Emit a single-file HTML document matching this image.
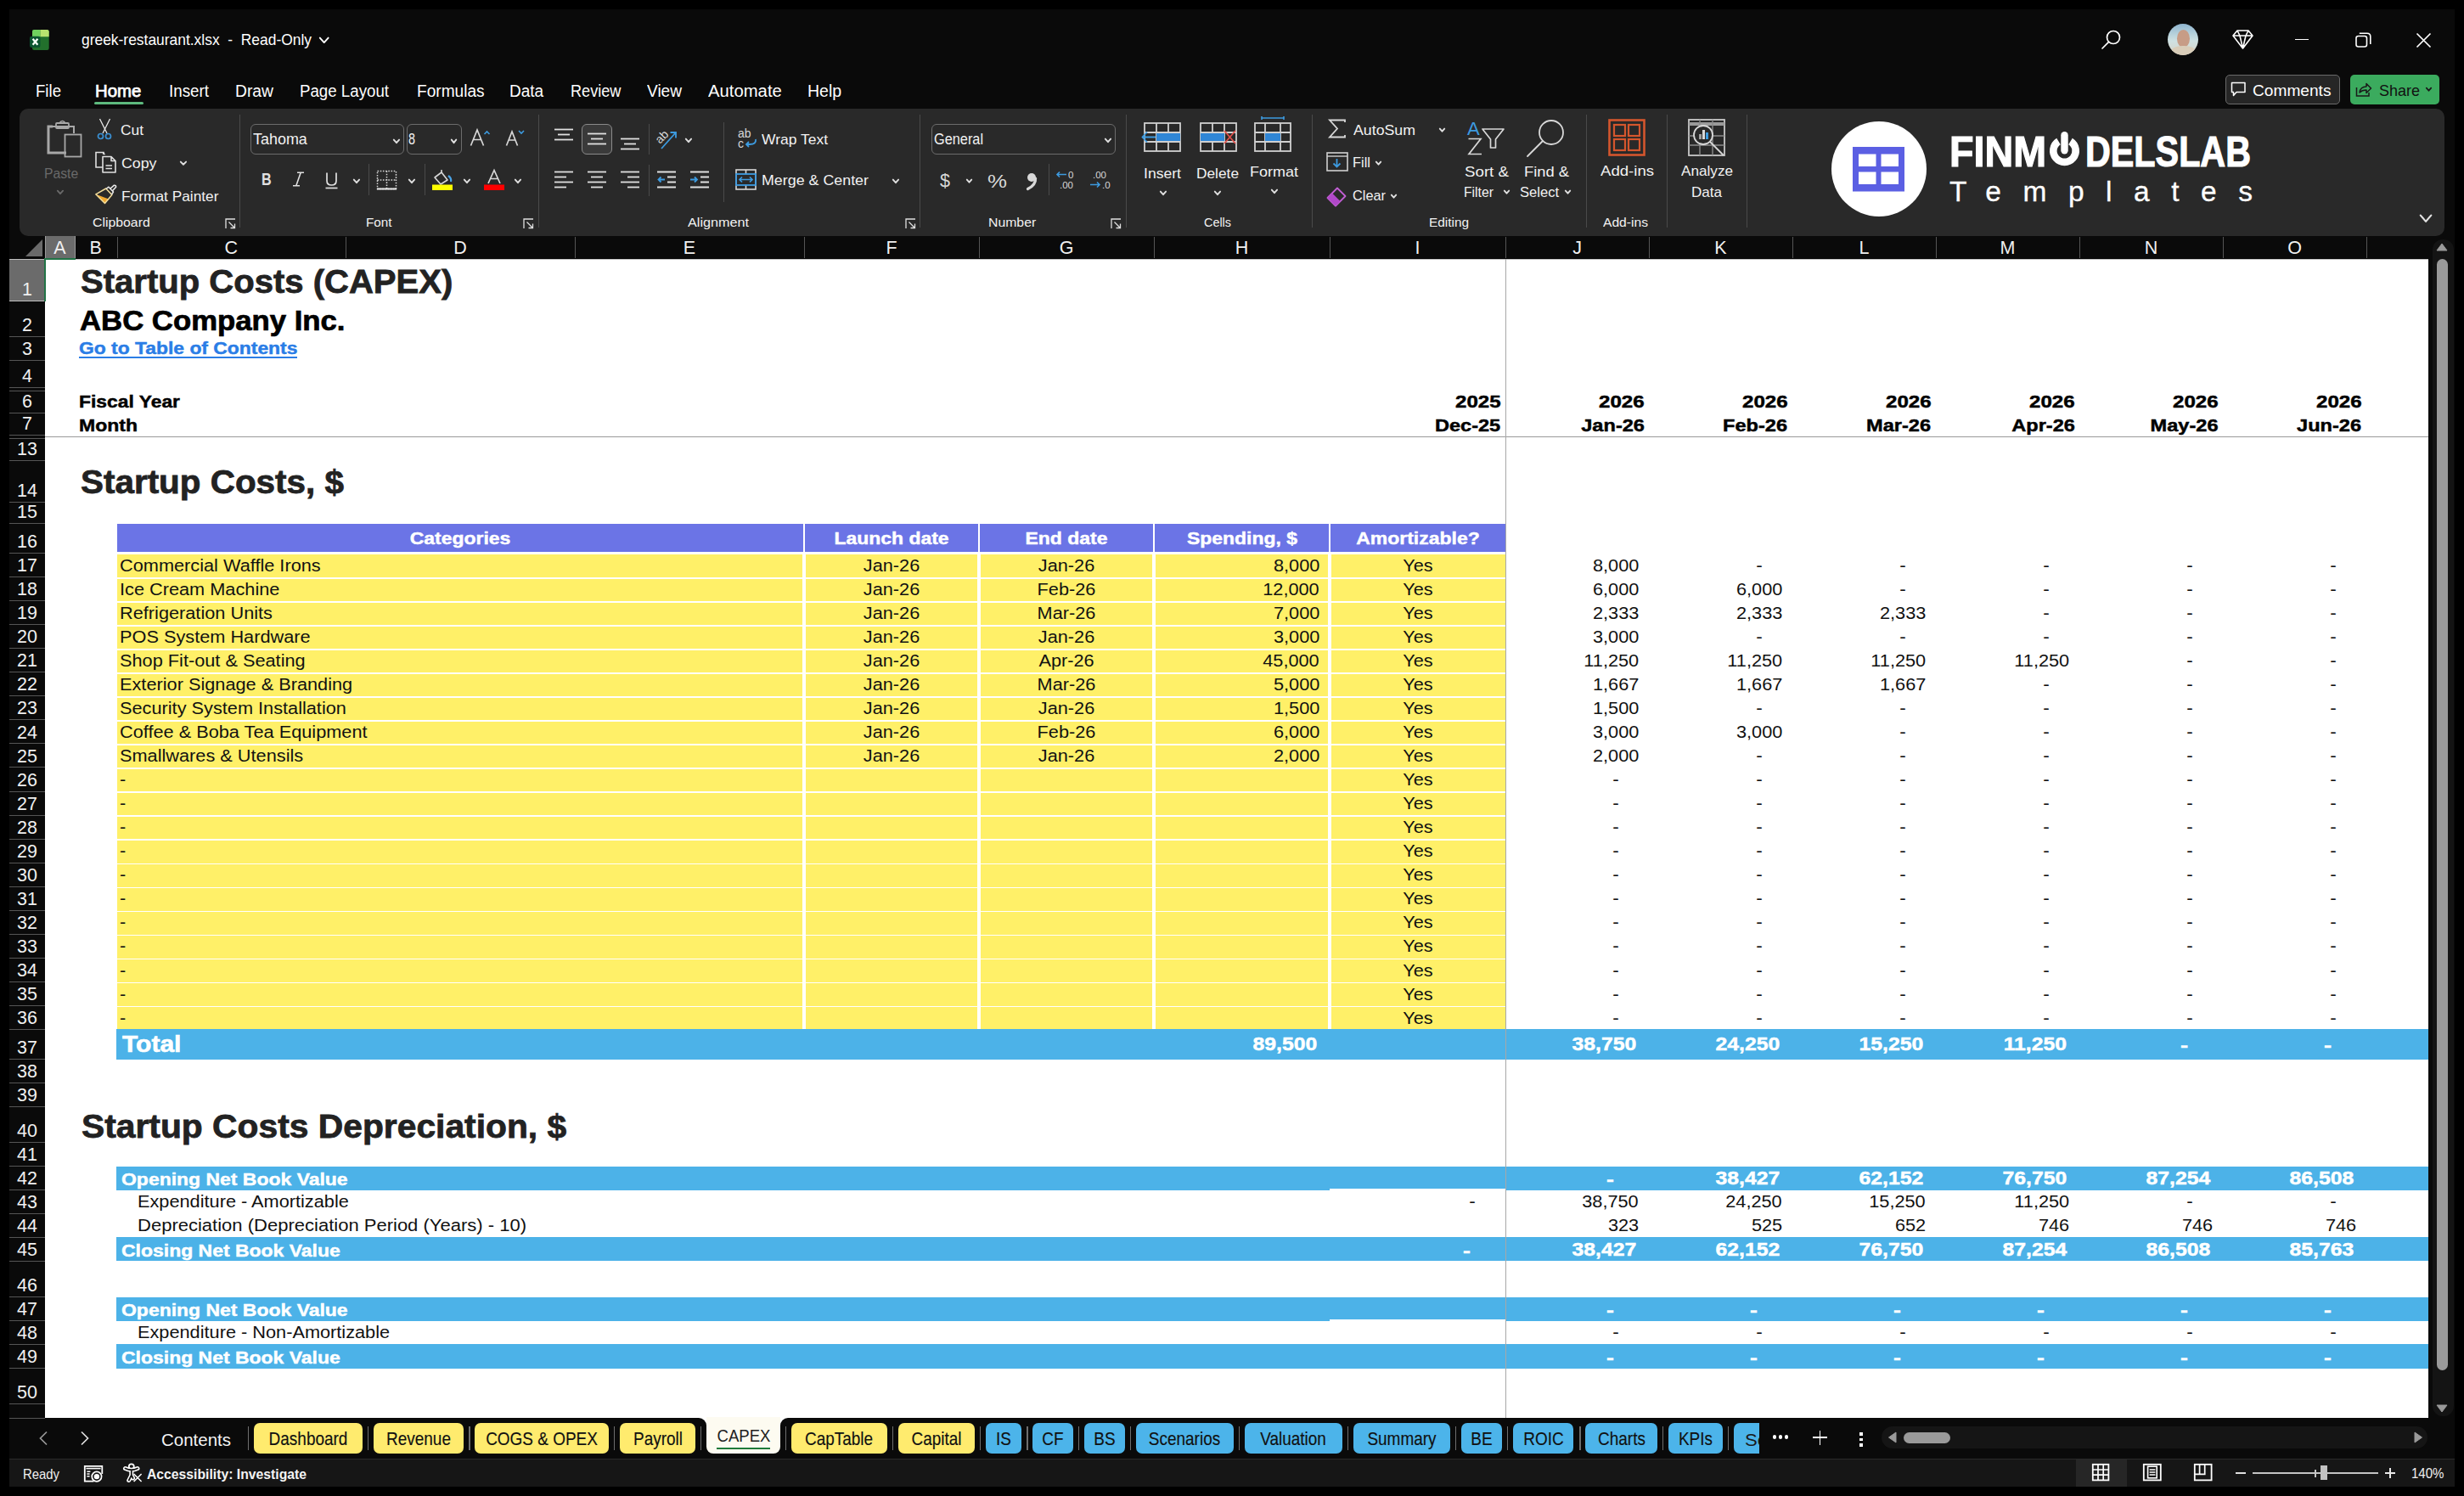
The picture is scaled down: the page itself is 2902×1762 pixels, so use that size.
<!DOCTYPE html>
<html><head><meta charset="utf-8"><title>greek-restaurant.xlsx</title>
<style>
html,body{margin:0;padding:0;}
body{width:2902px;height:1762px;position:relative;overflow:hidden;background:#000;font-family:"Liberation Sans",sans-serif;}
.t{position:absolute;white-space:pre;}
.r{position:absolute;}
svg.r{overflow:visible;}
</style></head><body>
<div class="r" style="left:11.00px;top:11.00px;width:2880.00px;height:1739.00px;background:#0a0a0a;"></div>
<svg class="r" style="left:34.00px;top:34.00px;" width="25.00" height="26.00" viewBox="0 0 25.00 26.00">
<rect x="4" y="1" width="19.7" height="24" rx="2.2" fill="#22702c"/>
<path d="M4 9.3 V3.2 Q4 1 6.2 1 H13.5 V9.3 Z" fill="#6fd15e"/>
<path d="M13.5 1 H21.5 Q23.7 1 23.7 3.2 V9.3 H13.5 Z" fill="#b9e46f"/>
<rect x="1" y="8.7" width="12.5" height="13.3" rx="2.2" fill="#0b5530"/>
<path d="M4.6 11.8 L10.4 18.8 M10.4 11.8 L4.6 18.8" stroke="#f4fff6" stroke-width="2.3"/>
</svg>
<div class="t" style="top:38.34px;font-size:18.50px;line-height:18.50px;color:#ffffff;left:95.50px;transform:scaleX(0.9414);transform-origin:0 0;">greek-restaurant.xlsx  -  Read-Only</div>
<svg class="r" style="left:375.28px;top:42.50px;" width="13.44" height="8.44" viewBox="0 0 13.44 8.44"><path d="M1.80 1.6 L6.72 7.04 L11.64 1.6" fill="none" stroke="#ffffff" stroke-width="1.9" stroke-linecap="round" stroke-linejoin="round"/></svg>
<svg class="r" style="left:2474.00px;top:34.00px;" width="25.00" height="26.00" viewBox="0 0 25.00 26.00"><circle cx="15" cy="10" r="7.5" fill="none" stroke="#fff" stroke-width="1.7"/><path d="M9.6 15.4 L2 23" stroke="#fff" stroke-width="1.7" stroke-linecap="round"/></svg>
<div class="r" style="left:2553px;top:28px;width:36px;height:37px;border-radius:50%;overflow:hidden;background:linear-gradient(180deg,#8fb5cf 0%,#b9d3dc 35%,#cfe1e2 55%,#d7d2c4 100%);"><div class="r" style="left:11px;top:7px;width:15px;height:21px;border-radius:50%;background:#c79c86;"></div><div class="r" style="left:4px;top:26px;width:29px;height:16px;border-radius:45% 45% 0 0;background:#d9cdb9;"></div></div>
<svg class="r" style="left:2628.00px;top:34.00px;" width="27.00" height="25.00" viewBox="0 0 27.00 25.00"><path d="M7 2 L20 2 L25 8 L13.5 23 L2 8 Z M2 8 L25 8 M7 2 L10 8 L13.5 23 L17 8 L20 2" fill="none" stroke="#fff" stroke-width="1.6" stroke-linejoin="round"/></svg>
<div class="r" style="left:2703.00px;top:45.50px;width:16.00px;height:1.70px;background:#ffffff;"></div>
<svg class="r" style="left:2774.00px;top:38.00px;" width="19.00" height="19.00" viewBox="0 0 19.00 19.00"><rect x="1" y="4.5" width="12.5" height="12.5" rx="2.5" fill="none" stroke="#fff" stroke-width="1.6"/><path d="M4.8 1.2 H14 Q17.8 1.2 17.8 5 V14" fill="none" stroke="#fff" stroke-width="1.6"/></svg>
<svg class="r" style="left:2845.00px;top:38.00px;" width="19.00" height="19.00" viewBox="0 0 19.00 19.00"><path d="M1.5 1.5 L17.5 17.5 M17.5 1.5 L1.5 17.5" stroke="#fff" stroke-width="1.7"/></svg>
<div class="t" style="top:97.07px;font-size:20.00px;line-height:20.00px;color:#ffffff;left:42.00px;transform:scaleX(0.9309);transform-origin:0 0;">File</div>
<div class="t" style="top:97.07px;font-size:20.00px;line-height:20.00px;color:#ffffff;left:111.70px;transform:scaleX(1.0178);transform-origin:0 0;-webkit-text-stroke:0.75px #ffffff;">Home</div>
<div class="t" style="top:97.07px;font-size:20.00px;line-height:20.00px;color:#ffffff;left:198.60px;transform:scaleX(0.9396);transform-origin:0 0;">Insert</div>
<div class="t" style="top:97.07px;font-size:20.00px;line-height:20.00px;color:#ffffff;left:277.00px;transform:scaleX(0.9642);transform-origin:0 0;">Draw</div>
<div class="t" style="top:97.07px;font-size:20.00px;line-height:20.00px;color:#ffffff;left:353.40px;transform:scaleX(0.9348);transform-origin:0 0;">Page Layout</div>
<div class="t" style="top:97.07px;font-size:20.00px;line-height:20.00px;color:#ffffff;left:491.40px;transform:scaleX(0.9550);transform-origin:0 0;">Formulas</div>
<div class="t" style="top:97.07px;font-size:20.00px;line-height:20.00px;color:#ffffff;left:600.40px;transform:scaleX(0.9515);transform-origin:0 0;">Data</div>
<div class="t" style="top:97.07px;font-size:20.00px;line-height:20.00px;color:#ffffff;left:671.60px;transform:scaleX(0.9058);transform-origin:0 0;">Review</div>
<div class="t" style="top:97.07px;font-size:20.00px;line-height:20.00px;color:#ffffff;left:762.00px;transform:scaleX(0.9537);transform-origin:0 0;">View</div>
<div class="t" style="top:97.07px;font-size:20.00px;line-height:20.00px;color:#ffffff;left:834.00px;transform:scaleX(1.0139);transform-origin:0 0;">Automate</div>
<div class="t" style="top:97.07px;font-size:20.00px;line-height:20.00px;color:#ffffff;left:951.30px;transform:scaleX(0.9773);transform-origin:0 0;">Help</div>
<div class="r" style="left:111.00px;top:120.00px;width:58.00px;height:3.20px;background:#5db97e;border-radius:2px;"></div>
<div class="r" style="left:2621px;top:87.5px;width:132.5px;height:33px;border:1px solid #6a6a6a;border-radius:5px;background:#262626;"></div>
<svg class="r" style="left:2627.00px;top:96.00px;" width="19.00" height="19.00" viewBox="0 0 19.00 19.00"><path d="M1.5 1.5 H17 V12.5 H7 L3.5 16.5 V12.5 H1.5 Z" fill="none" stroke="#fff" stroke-width="1.5" stroke-linejoin="round"/></svg>
<div class="t" style="top:97.42px;font-size:19.00px;line-height:19.00px;color:#ffffff;left:2653.00px;transform:scaleX(1.0070);transform-origin:0 0;">Comments</div>
<div class="r" style="left:2768px;top:87.5px;width:105px;height:35px;border-radius:5px;background:#3bab5e;"></div>
<svg class="r" style="left:2774.00px;top:96.00px;" width="20.00" height="19.00" viewBox="0 0 20.00 19.00"><path d="M1.5 7 V17 H16 V13" fill="none" stroke="#1a1a1a" stroke-width="1.5"/><path d="M5 13 Q6 6 13 6 V2.5 L18.5 8 L13 13.5 V10 Q8 10 5 13 Z" fill="none" stroke="#1a1a1a" stroke-width="1.5" stroke-linejoin="round"/></svg>
<div class="t" style="top:97.42px;font-size:19.00px;line-height:19.00px;color:#111111;left:2802.00px;transform:scaleX(0.9467);transform-origin:0 0;">Share</div>
<svg class="r" style="left:2856.48px;top:101.50px;" width="9.04" height="6.14" viewBox="0 0 9.04 6.14"><path d="M1.80 1.6 L4.52 4.74 L7.24 1.6" fill="none" stroke="#1a1a1a" stroke-width="1.8" stroke-linecap="round" stroke-linejoin="round"/></svg>
<div class="r" style="left:23.00px;top:128.00px;width:2856.00px;height:150.00px;background:#292929;border-radius:10px;"></div>
<svg class="r" style="left:54.00px;top:140.00px;" width="44.00" height="48.00" viewBox="0 0 44.00 48.00">
<path d="M8 9 H3 V40 H24" fill="none" stroke="#a8a8a8" stroke-width="3"/>
<path d="M6.5 9 H33 V17" fill="none" stroke="#a8a8a8" stroke-width="2"/>
<rect x="12" y="5" width="15" height="6" rx="1" fill="none" stroke="#a8a8a8" stroke-width="1.8"/>
<path d="M16 5 Q19.5 0 23 5" fill="none" stroke="#a8a8a8" stroke-width="1.6"/>
<rect x="22.5" y="18.5" width="19" height="26" fill="none" stroke="#a8a8a8" stroke-width="1.8"/>
</svg>
<div class="t" style="top:196.03px;font-size:16.50px;line-height:16.50px;color:#6a6a6a;left:51.80px;transform:scaleX(0.9528);transform-origin:0 0;">Paste</div>
<svg class="r" style="left:66.04px;top:223.00px;" width="9.92" height="6.60" viewBox="0 0 9.92 6.60"><path d="M1.80 1.6 L4.96 5.20 L8.12 1.6" fill="none" stroke="#6a6a6a" stroke-width="1.8" stroke-linecap="round" stroke-linejoin="round"/></svg>
<svg class="r" style="left:113.00px;top:139.00px;" width="21.00" height="27.00" viewBox="0 0 21.00 27.00">
<path d="M4.5 1 L13 18 M16.5 1 L8 18" stroke="#e8e8e8" stroke-width="1.3"/>
<circle cx="5.5" cy="21.5" r="3" fill="none" stroke="#3a8fd2" stroke-width="1.7"/>
<circle cx="14.5" cy="21.5" r="3" fill="none" stroke="#3a8fd2" stroke-width="1.7"/>
</svg>
<div class="t" style="top:145.03px;font-size:16.50px;line-height:16.50px;color:#f2f2f2;left:142.00px;transform:scaleX(1.0515);transform-origin:0 0;">Cut</div>
<svg class="r" style="left:111.00px;top:178.00px;" width="27.00" height="27.00" viewBox="0 0 27.00 27.00">
<path d="M11 4 V1.5 H2 V19 H10" fill="none" stroke="#e0e0e0" stroke-width="1.6"/>
<path d="M10 1.5 L12.5 4" fill="none" stroke="#e0e0e0" stroke-width="1.4"/>
<path d="M10 6.5 H20 L25 11.5 V25 H10 Z M20 6.5 V11.5 H25" fill="none" stroke="#e0e0e0" stroke-width="1.6" stroke-linejoin="round"/>
<path d="M13.5 17 H21 M13.5 20.5 H21" stroke="#e0e0e0" stroke-width="1.6"/>
</svg>
<div class="t" style="top:184.03px;font-size:16.50px;line-height:16.50px;color:#f2f2f2;left:142.50px;transform:scaleX(1.0774);transform-origin:0 0;">Copy</div>
<svg class="r" style="left:210.54px;top:188.50px;" width="9.92" height="6.14" viewBox="0 0 9.92 6.14"><path d="M1.80 1.6 L4.96 4.74 L8.12 1.6" fill="none" stroke="#e0e0e0" stroke-width="1.9" stroke-linecap="round" stroke-linejoin="round"/></svg>
<svg class="r" style="left:111.00px;top:217.00px;" width="27.00" height="25.00" viewBox="0 0 27.00 25.00">
<path d="M1.8 11.8 L7 17 L12.5 22.5 L17 17.5 Z" fill="#f0a830"/>
<path d="M1.8 11.8 L13.8 5 L20.8 12.5 L12.5 22.5 Z" fill="none" stroke="#f2dc9a" stroke-width="1.5" stroke-linejoin="round"/>
<path d="M14 5.5 L17 3.2 L22.5 9 L20.5 12" fill="none" stroke="#e8e8e8" stroke-width="1.5" stroke-linejoin="round"/>
<path d="M18.5 5.5 L23.2 1.3 Q25.8 0.8 25.6 3.3 L21.2 8" fill="none" stroke="#e8e8e8" stroke-width="1.6" stroke-linejoin="round"/>
</svg>
<div class="t" style="top:223.03px;font-size:16.50px;line-height:16.50px;color:#f2f2f2;left:142.50px;transform:scaleX(1.0493);transform-origin:0 0;">Format Painter</div>
<div class="t" style="top:254.38px;font-size:15.50px;line-height:15.50px;color:#f2f2f2;left:109.00px;transform:scaleX(1.0204);transform-origin:0 0;">Clipboard</div>
<svg class="r" style="left:265.00px;top:256.50px;" width="13.00" height="13.00" viewBox="0 0 13.00 13.00"><path d="M1 12 V1 H12" fill="none" stroke="#e0e0e0" stroke-width="1.3"/><path d="M4.5 4.5 L11.5 11.5 M11.5 6.5 V11.5 H6.5" fill="none" stroke="#e0e0e0" stroke-width="1.3"/></svg>
<div class="r" style="left:282.00px;top:135.00px;width:1.00px;height:133.00px;background:#4a4a4a;"></div>
<div class="r" style="left:295.3px;top:146.2px;width:178.5px;height:33.5px;border:1px solid #6c6c6c;border-radius:6px;"></div>
<div class="t" style="top:156.19px;font-size:17.50px;line-height:17.50px;color:#f2f2f2;left:298.00px;transform:scaleX(1.0248);transform-origin:0 0;">Tahoma</div>
<svg class="r" style="left:462.14px;top:162.50px;" width="9.92" height="6.60" viewBox="0 0 9.92 6.60"><path d="M1.80 1.6 L4.96 5.20 L8.12 1.6" fill="none" stroke="#e0e0e0" stroke-width="1.9" stroke-linecap="round" stroke-linejoin="round"/></svg>
<div class="r" style="left:479px;top:146.2px;width:62.7px;height:33.5px;border:1px solid #6c6c6c;border-radius:6px;"></div>
<div class="t" style="top:156.19px;font-size:17.50px;line-height:17.50px;color:#f2f2f2;left:480.60px;transform:scaleX(0.8220);transform-origin:0 0;">8</div>
<svg class="r" style="left:530.48px;top:162.50px;" width="9.04" height="6.60" viewBox="0 0 9.04 6.60"><path d="M1.80 1.6 L4.52 5.20 L7.24 1.6" fill="none" stroke="#e0e0e0" stroke-width="1.9" stroke-linecap="round" stroke-linejoin="round"/></svg>
<svg class="r" style="left:553.00px;top:151.00px;" width="26.00" height="22.00" viewBox="0 0 26.00 22.00"><path d="M1.5 20.5 L9 2 L16.5 20.5 M4.5 13.5 H13.5" fill="none" stroke="#d8d8d8" stroke-width="1.7"/><path d="M17.5 7 L20.5 4 L23.5 7" fill="none" stroke="#3d9be0" stroke-width="1.6"/></svg>
<svg class="r" style="left:595.00px;top:151.00px;" width="24.00" height="22.00" viewBox="0 0 24.00 22.00"><path d="M1.5 20.5 L8 4 L14.5 20.5 M4 14 H12" fill="none" stroke="#d8d8d8" stroke-width="1.7"/><path d="M16 3 L19 6 L22 3" fill="none" stroke="#3d9be0" stroke-width="1.6"/></svg>
<div class="t" style="top:200.87px;font-size:20.00px;line-height:20.00px;color:#e0e0e0;font-weight:bold;left:307.80px;transform:scaleX(0.8100);transform-origin:0 0;">B</div>
<svg class="r" style="left:344.00px;top:202.00px;" width="15.00" height="18.00" viewBox="0 0 15.00 18.00"><path d="M6 1.2 H14 M1 16.8 H9 M10.2 1.2 L4.8 16.8" fill="none" stroke="#e0e0e0" stroke-width="1.6"/></svg>
<svg class="r" style="left:382.00px;top:202.00px;" width="17.00" height="21.00" viewBox="0 0 17.00 21.00"><path d="M3 1.5 V11 Q3 16 8.5 16 Q14 16 14 11 V1.5" fill="none" stroke="#e0e0e0" stroke-width="1.7"/><path d="M1.5 19.5 H15.5" stroke="#e0e0e0" stroke-width="1.7"/></svg>
<svg class="r" style="left:414.54px;top:209.50px;" width="9.92" height="6.60" viewBox="0 0 9.92 6.60"><path d="M1.80 1.6 L4.96 5.20 L8.12 1.6" fill="none" stroke="#e0e0e0" stroke-width="1.9" stroke-linecap="round" stroke-linejoin="round"/></svg>
<div class="r" style="left:434.00px;top:193.00px;width:1.00px;height:37.00px;background:#4a4a4a;"></div>
<svg class="r" style="left:443.00px;top:200.00px;" width="25.00" height="24.00" viewBox="0 0 25.00 24.00"><path d="M1.5 1.5 H23.5 V22.5 H1.5 Z M12.5 1.5 V22.5 M1.5 12 H23.5" fill="none" stroke="#d8d8d8" stroke-width="1.5" stroke-dasharray="1.6 1.6"/><path d="M1 22.5 H24" stroke="#e8e8e8" stroke-width="2"/></svg>
<svg class="r" style="left:479.54px;top:209.50px;" width="9.92" height="6.60" viewBox="0 0 9.92 6.60"><path d="M1.80 1.6 L4.96 5.20 L8.12 1.6" fill="none" stroke="#e0e0e0" stroke-width="1.9" stroke-linecap="round" stroke-linejoin="round"/></svg>
<div class="r" style="left:499.50px;top:193.00px;width:1.00px;height:37.00px;background:#4a4a4a;"></div>
<svg class="r" style="left:508.00px;top:199.00px;" width="26.00" height="26.00" viewBox="0 0 26.00 26.00"><path d="M4 10 L12 4 L19 13 L11 18 Z" fill="none" stroke="#d8d8d8" stroke-width="1.6" stroke-linejoin="round"/><path d="M12 4 V1" stroke="#d8d8d8" stroke-width="1.6"/><path d="M20 8 Q24 11 23 15" fill="none" stroke="#4aa3e6" stroke-width="2.2"/><rect x="1" y="18.5" width="24" height="6.5" fill="#ffff00"/></svg>
<svg class="r" style="left:544.54px;top:209.50px;" width="9.92" height="6.60" viewBox="0 0 9.92 6.60"><path d="M1.80 1.6 L4.96 5.20 L8.12 1.6" fill="none" stroke="#e0e0e0" stroke-width="1.9" stroke-linecap="round" stroke-linejoin="round"/></svg>
<svg class="r" style="left:569.00px;top:199.00px;" width="26.00" height="26.00" viewBox="0 0 26.00 26.00"><path d="M6 17 L13 1.5 L20 17 M8.5 11.5 H17.5" fill="none" stroke="#d8d8d8" stroke-width="1.7"/><rect x="1" y="18.5" width="24" height="6.5" fill="#ff0000"/></svg>
<svg class="r" style="left:604.54px;top:209.50px;" width="9.92" height="6.60" viewBox="0 0 9.92 6.60"><path d="M1.80 1.6 L4.96 5.20 L8.12 1.6" fill="none" stroke="#e0e0e0" stroke-width="1.9" stroke-linecap="round" stroke-linejoin="round"/></svg>
<div class="t" style="top:254.38px;font-size:15.50px;line-height:15.50px;color:#f2f2f2;left:430.50px;transform:scaleX(0.9834);transform-origin:0 0;">Font</div>
<svg class="r" style="left:616.00px;top:256.50px;" width="13.00" height="13.00" viewBox="0 0 13.00 13.00"><path d="M1 12 V1 H12" fill="none" stroke="#e0e0e0" stroke-width="1.3"/><path d="M4.5 4.5 L11.5 11.5 M11.5 6.5 V11.5 H6.5" fill="none" stroke="#e0e0e0" stroke-width="1.3"/></svg>
<div class="r" style="left:633.50px;top:135.00px;width:1.00px;height:133.00px;background:#4a4a4a;"></div>
<svg class="r" style="left:653.00px;top:151.00px;" width="22.00" height="15.00" viewBox="0 0 22.00 15.00"><path d="M0.0 1.5 H22.0" stroke="#e0e0e0" stroke-width="1.8"/><path d="M4.0 7.5 H18.0" stroke="#e0e0e0" stroke-width="1.8"/><path d="M0.0 13.5 H22.0" stroke="#e0e0e0" stroke-width="1.8"/></svg>
<div class="r" style="left:685px;top:146px;width:34px;height:34px;border:1px solid #8a8a8a;border-radius:6px;background:#3a3a3a;"></div>
<svg class="r" style="left:692.00px;top:156.00px;" width="22.00" height="15.00" viewBox="0 0 22.00 15.00"><path d="M0.0 1.5 H22.0" stroke="#e0e0e0" stroke-width="1.8"/><path d="M4.0 7.5 H18.0" stroke="#e0e0e0" stroke-width="1.8"/><path d="M0.0 13.5 H22.0" stroke="#e0e0e0" stroke-width="1.8"/></svg>
<svg class="r" style="left:731.00px;top:162.00px;" width="22.00" height="15.00" viewBox="0 0 22.00 15.00"><path d="M0.0 1.5 H22.0" stroke="#e0e0e0" stroke-width="1.8"/><path d="M4.0 7.5 H18.0" stroke="#e0e0e0" stroke-width="1.8"/><path d="M0.0 13.5 H22.0" stroke="#e0e0e0" stroke-width="1.8"/></svg>
<div class="r" style="left:763.50px;top:146.00px;width:1.00px;height:36.00px;background:#4a4a4a;"></div>
<svg class="r" style="left:772.00px;top:150.00px;" width="27.00" height="27.00" viewBox="0 0 27.00 27.00"><text x="-1" y="15" font-size="14" fill="#d8d8d8" font-family="Liberation Sans" transform="rotate(-45 8 10)">ab</text><path d="M7 25 L24 6 M17.5 6 H24 V12.5" fill="none" stroke="#3d9be0" stroke-width="1.8"/></svg>
<svg class="r" style="left:805.54px;top:162.00px;" width="9.92" height="6.60" viewBox="0 0 9.92 6.60"><path d="M1.80 1.6 L4.96 5.20 L8.12 1.6" fill="none" stroke="#e0e0e0" stroke-width="1.9" stroke-linecap="round" stroke-linejoin="round"/></svg>
<div class="r" style="left:851.50px;top:144.00px;width:1.00px;height:94.00px;background:#4a4a4a;"></div>
<svg class="r" style="left:869.00px;top:151.00px;" width="24.00" height="26.00" viewBox="0 0 24.00 26.00"><text x="0" y="11" font-size="14" fill="#d8d8d8" font-family="Liberation Sans">ab</text><text x="0" y="23" font-size="14" fill="#d8d8d8" font-family="Liberation Sans">c</text><path d="M21 13 Q22 19 14 19 H10 M13 16 L10 19 L13 22" fill="none" stroke="#3d9be0" stroke-width="1.8"/></svg>
<div class="t" style="top:156.31px;font-size:17.00px;line-height:17.00px;color:#f2f2f2;left:897.00px;transform:scaleX(1.0276);transform-origin:0 0;">Wrap Text</div>
<svg class="r" style="left:653.00px;top:201.00px;" width="22.00" height="21.00" viewBox="0 0 22.00 21.00"><path d="M0.0 1.5 H22.0" stroke="#e0e0e0" stroke-width="1.8"/><path d="M0.0 7.5 H14.0" stroke="#e0e0e0" stroke-width="1.8"/><path d="M0.0 13.5 H22.0" stroke="#e0e0e0" stroke-width="1.8"/><path d="M0.0 19.5 H14.0" stroke="#e0e0e0" stroke-width="1.8"/></svg>
<svg class="r" style="left:692.00px;top:201.00px;" width="22.00" height="21.00" viewBox="0 0 22.00 21.00"><path d="M0.0 1.5 H22.0" stroke="#e0e0e0" stroke-width="1.8"/><path d="M4.0 7.5 H18.0" stroke="#e0e0e0" stroke-width="1.8"/><path d="M0.0 13.5 H22.0" stroke="#e0e0e0" stroke-width="1.8"/><path d="M4.0 19.5 H18.0" stroke="#e0e0e0" stroke-width="1.8"/></svg>
<svg class="r" style="left:731.00px;top:201.00px;" width="22.00" height="21.00" viewBox="0 0 22.00 21.00"><path d="M0.0 1.5 H22.0" stroke="#e0e0e0" stroke-width="1.8"/><path d="M8.0 7.5 H22.0" stroke="#e0e0e0" stroke-width="1.8"/><path d="M0.0 13.5 H22.0" stroke="#e0e0e0" stroke-width="1.8"/><path d="M8.0 19.5 H22.0" stroke="#e0e0e0" stroke-width="1.8"/></svg>
<div class="r" style="left:763.50px;top:194.00px;width:1.00px;height:37.00px;background:#4a4a4a;"></div>
<svg class="r" style="left:774.00px;top:201.00px;" width="22.00" height="21.00" viewBox="0 0 22.00 21.00"><path d="M0 1.5 H22 M12 7.5 H22 M12 13.5 H22 M0 19.5 H22" stroke="#e0e0e0" stroke-width="1.8"/><path d="M9 10.5 H1.5 M4.5 7.5 L1.5 10.5 L4.5 13.5" fill="none" stroke="#3d9be0" stroke-width="1.8"/></svg>
<svg class="r" style="left:813.00px;top:201.00px;" width="22.00" height="21.00" viewBox="0 0 22.00 21.00"><path d="M0 1.5 H22 M12 7.5 H22 M12 13.5 H22 M0 19.5 H22" stroke="#e0e0e0" stroke-width="1.8"/><path d="M0 10.5 H8 M5 7.5 L8 10.5 L5 13.5" fill="none" stroke="#3d9be0" stroke-width="1.8"/></svg>
<svg class="r" style="left:866.00px;top:199.00px;" width="25.00" height="25.00" viewBox="0 0 25.00 25.00"><rect x="1" y="1" width="23" height="23" fill="none" stroke="#d8d8d8" stroke-width="1.6"/><path d="M12.5 1 V6 M12.5 19 V24" stroke="#d8d8d8" stroke-width="1.6"/><rect x="1" y="6" width="23" height="13" fill="none" stroke="#3d9be0" stroke-width="1.8"/><path d="M5 12.5 H20 M8 9.5 L5 12.5 L8 15.5 M17 9.5 L20 12.5 L17 15.5" fill="none" stroke="#3d9be0" stroke-width="1.7"/></svg>
<div class="t" style="top:203.91px;font-size:17.00px;line-height:17.00px;color:#f2f2f2;left:897.00px;transform:scaleX(1.0500);transform-origin:0 0;">Merge &amp; Center</div>
<svg class="r" style="left:1049.54px;top:209.50px;" width="9.92" height="6.60" viewBox="0 0 9.92 6.60"><path d="M1.80 1.6 L4.96 5.20 L8.12 1.6" fill="none" stroke="#e0e0e0" stroke-width="1.9" stroke-linecap="round" stroke-linejoin="round"/></svg>
<div class="t" style="top:254.38px;font-size:15.50px;line-height:15.50px;color:#f2f2f2;left:810.00px;transform:scaleX(1.0446);transform-origin:0 0;">Alignment</div>
<svg class="r" style="left:1066.00px;top:256.50px;" width="13.00" height="13.00" viewBox="0 0 13.00 13.00"><path d="M1 12 V1 H12" fill="none" stroke="#e0e0e0" stroke-width="1.3"/><path d="M4.5 4.5 L11.5 11.5 M11.5 6.5 V11.5 H6.5" fill="none" stroke="#e0e0e0" stroke-width="1.3"/></svg>
<div class="r" style="left:1083.00px;top:135.00px;width:1.00px;height:133.00px;background:#4a4a4a;"></div>
<div class="r" style="left:1096.6px;top:146px;width:215.2px;height:33.5px;border:1px solid #6c6c6c;border-radius:6px;"></div>
<div class="t" style="top:155.99px;font-size:17.50px;line-height:17.50px;color:#f2f2f2;left:1100.00px;transform:scaleX(0.9316);transform-origin:0 0;">General</div>
<svg class="r" style="left:1299.54px;top:162.00px;" width="9.92" height="6.60" viewBox="0 0 9.92 6.60"><path d="M1.80 1.6 L4.96 5.20 L8.12 1.6" fill="none" stroke="#e0e0e0" stroke-width="1.9" stroke-linecap="round" stroke-linejoin="round"/></svg>
<div class="t" style="top:202.38px;font-size:22.00px;line-height:22.00px;color:#d8d8d8;left:1107.00px;transform:scaleX(0.9808);transform-origin:0 0;">$</div>
<svg class="r" style="left:1137.48px;top:209.50px;" width="9.04" height="6.14" viewBox="0 0 9.04 6.14"><path d="M1.80 1.6 L4.52 4.74 L7.24 1.6" fill="none" stroke="#e0e0e0" stroke-width="1.9" stroke-linecap="round" stroke-linejoin="round"/></svg>
<div class="t" style="top:202.88px;font-size:22.00px;line-height:22.00px;color:#d8d8d8;left:1163.00px;transform:scaleX(1.1758);transform-origin:0 0;">%</div>
<svg class="r" style="left:1207.00px;top:203.00px;" width="15.00" height="20.00" viewBox="0 0 15.00 20.00"><circle cx="8" cy="6" r="5" fill="#d8d8d8"/><path d="M12.6 7 Q13 15 3.5 19.5" fill="none" stroke="#d8d8d8" stroke-width="3.2" stroke-linecap="round"/></svg>
<div class="r" style="left:1235.00px;top:193.00px;width:1.00px;height:37.00px;background:#4a4a4a;"></div>
<svg class="r" style="left:1243.00px;top:199.00px;" width="27.00" height="25.00" viewBox="0 0 27.00 25.00"><text x="15" y="11" font-size="11.5" fill="#d8d8d8" font-family="Liberation Sans">0</text><text x="5" y="23" font-size="11.5" fill="#d8d8d8" font-family="Liberation Sans">.00</text><path d="M13 6.5 H2 M5 3.5 L2 6.5 L5 9.5" fill="none" stroke="#3d9be0" stroke-width="1.6"/></svg>
<svg class="r" style="left:1282.00px;top:199.00px;" width="27.00" height="25.00" viewBox="0 0 27.00 25.00"><text x="5" y="11" font-size="11.5" fill="#d8d8d8" font-family="Liberation Sans">.00</text><text x="16" y="23" font-size="11.5" fill="#d8d8d8" font-family="Liberation Sans">.0</text><path d="M2 18.5 H13 M10 15.5 L13 18.5 L10 21.5" fill="none" stroke="#3d9be0" stroke-width="1.6"/></svg>
<div class="t" style="top:254.38px;font-size:15.50px;line-height:15.50px;color:#f2f2f2;left:1163.80px;transform:scaleX(1.0194);transform-origin:0 0;">Number</div>
<svg class="r" style="left:1308.00px;top:256.50px;" width="13.00" height="13.00" viewBox="0 0 13.00 13.00"><path d="M1 12 V1 H12" fill="none" stroke="#e0e0e0" stroke-width="1.3"/><path d="M4.5 4.5 L11.5 11.5 M11.5 6.5 V11.5 H6.5" fill="none" stroke="#e0e0e0" stroke-width="1.3"/></svg>
<div class="r" style="left:1325.50px;top:135.00px;width:1.00px;height:133.00px;background:#4a4a4a;"></div>
<svg class="r" style="left:1344.00px;top:144.00px;" width="50.00" height="36.00" viewBox="0 0 50.00 36.00"><rect x="4" y="1" width="42" height="33" fill="none" stroke="#d0d0d0" stroke-width="1.8"/><path d="M4 12 H46 M4 23 H46 M18 1 V34 M32 1 V34" stroke="#d0d0d0" stroke-width="1.8"/><rect x="18" y="13" width="28" height="9" fill="#2f86d6"/><path d="M17 17.5 H2 M7 11.5 L1.5 17.5 L7 23.5" fill="none" stroke="#3d9be0" stroke-width="1.8"/></svg>
<div class="t" style="top:195.91px;font-size:17.00px;line-height:17.00px;color:#f2f2f2;left:1347.00px;transform:scaleX(1.0349);transform-origin:0 0;">Insert</div>
<svg class="r" style="left:1364.54px;top:224.00px;" width="9.92" height="6.60" viewBox="0 0 9.92 6.60"><path d="M1.80 1.6 L4.96 5.20 L8.12 1.6" fill="none" stroke="#e0e0e0" stroke-width="1.9" stroke-linecap="round" stroke-linejoin="round"/></svg>
<svg class="r" style="left:1410.00px;top:144.00px;" width="50.00" height="36.00" viewBox="0 0 50.00 36.00"><rect x="4" y="1" width="42" height="33" fill="none" stroke="#d0d0d0" stroke-width="1.8"/><path d="M4 12 H46 M4 23 H46 M18 1 V34 M32 1 V34" stroke="#d0d0d0" stroke-width="1.8"/><rect x="4" y="13" width="28" height="9" fill="#2f86d6"/><path d="M32 10 L45 25 M45 10 L32 25" stroke="#e0504a" stroke-width="1.8"/></svg>
<div class="t" style="top:195.91px;font-size:17.00px;line-height:17.00px;color:#f2f2f2;left:1409.00px;transform:scaleX(1.0175);transform-origin:0 0;">Delete</div>
<svg class="r" style="left:1429.04px;top:224.00px;" width="9.92" height="6.60" viewBox="0 0 9.92 6.60"><path d="M1.80 1.6 L4.96 5.20 L8.12 1.6" fill="none" stroke="#e0e0e0" stroke-width="1.9" stroke-linecap="round" stroke-linejoin="round"/></svg>
<svg class="r" style="left:1477.00px;top:137.00px;" width="46.00" height="43.00" viewBox="0 0 46.00 43.00"><rect x="1" y="8" width="42" height="33" fill="none" stroke="#d0d0d0" stroke-width="1.8"/><path d="M1 19 H43 M1 30 H43 M13 8 V41 M31 8 V41" stroke="#d0d0d0" stroke-width="1.8"/><rect x="13" y="20" width="18" height="9" fill="#2f86d6"/><path d="M9 2 H35 M9 0 V4 M35 0 V4" stroke="#3d9be0" stroke-width="1.6"/></svg>
<div class="t" style="top:194.11px;font-size:17.00px;line-height:17.00px;color:#f2f2f2;left:1472.00px;transform:scaleX(1.0587);transform-origin:0 0;">Format</div>
<svg class="r" style="left:1495.54px;top:222.00px;" width="9.92" height="6.60" viewBox="0 0 9.92 6.60"><path d="M1.80 1.6 L4.96 5.20 L8.12 1.6" fill="none" stroke="#e0e0e0" stroke-width="1.9" stroke-linecap="round" stroke-linejoin="round"/></svg>
<div class="t" style="top:254.38px;font-size:15.50px;line-height:15.50px;color:#f2f2f2;left:1418.00px;transform:scaleX(0.9288);transform-origin:0 0;">Cells</div>
<div class="r" style="left:1544.50px;top:135.00px;width:1.00px;height:133.00px;background:#4a4a4a;"></div>
<svg class="r" style="left:1564.00px;top:140.00px;" width="22.00" height="23.00" viewBox="0 0 22.00 23.00"><path d="M20 4 V1.5 H2 L11 11.5 L2 21.5 H20 V19" fill="none" stroke="#d8d8d8" stroke-width="1.8" stroke-linejoin="miter"/></svg>
<div class="t" style="top:144.61px;font-size:17.00px;line-height:17.00px;color:#f2f2f2;left:1593.70px;transform:scaleX(1.0440);transform-origin:0 0;">AutoSum</div>
<svg class="r" style="left:1694.48px;top:150.00px;" width="9.04" height="6.14" viewBox="0 0 9.04 6.14"><path d="M1.80 1.6 L4.52 4.74 L7.24 1.6" fill="none" stroke="#e0e0e0" stroke-width="1.9" stroke-linecap="round" stroke-linejoin="round"/></svg>
<svg class="r" style="left:1562.00px;top:179.00px;" width="26.00" height="24.00" viewBox="0 0 26.00 24.00"><rect x="1" y="1" width="24" height="21" fill="none" stroke="#d0d0d0" stroke-width="1.6"/><path d="M1 5 H25" stroke="#d0d0d0" stroke-width="1.4"/><path d="M12.5 8 V17 M8.5 13.5 L12.5 17.5 L16.5 13.5" fill="none" stroke="#3d9be0" stroke-width="1.8"/></svg>
<div class="t" style="top:182.61px;font-size:17.00px;line-height:17.00px;color:#f2f2f2;left:1593.00px;transform:scaleX(0.9671);transform-origin:0 0;">Fill</div>
<svg class="r" style="left:1619.48px;top:189.00px;" width="9.04" height="6.14" viewBox="0 0 9.04 6.14"><path d="M1.80 1.6 L4.52 4.74 L7.24 1.6" fill="none" stroke="#e0e0e0" stroke-width="1.9" stroke-linecap="round" stroke-linejoin="round"/></svg>
<svg class="r" style="left:1562.00px;top:217.00px;" width="26.00" height="26.00" viewBox="0 0 26.00 26.00"><path d="M1.5 16 L13 4.5 L22.5 14 L11 25.5 Z" fill="none" stroke="#c25fd4" stroke-width="1.8" stroke-linejoin="round"/><path d="M1.5 16 L7 10.5 L16.5 20 L11 25.5 Z" fill="#b048c8"/></svg>
<div class="t" style="top:221.61px;font-size:17.00px;line-height:17.00px;color:#f2f2f2;left:1593.00px;transform:scaleX(0.9600);transform-origin:0 0;">Clear</div>
<svg class="r" style="left:1637.48px;top:228.00px;" width="9.04" height="6.14" viewBox="0 0 9.04 6.14"><path d="M1.80 1.6 L4.52 4.74 L7.24 1.6" fill="none" stroke="#e0e0e0" stroke-width="1.9" stroke-linecap="round" stroke-linejoin="round"/></svg>
<svg class="r" style="left:1728.00px;top:140.00px;" width="46.00" height="44.00" viewBox="0 0 46.00 44.00"><text x="0" y="19" font-size="22" fill="#3d9be0" font-family="Liberation Sans">A</text><path d="M1.5 23.5 H16 L2 41.5 H17" fill="none" stroke="#d8d8d8" stroke-width="1.7"/><path d="M18 12 H43 L33.5 24 V34 H27.5 V24 Z" fill="none" stroke="#d8d8d8" stroke-width="1.7" stroke-linejoin="round"/></svg>
<div class="t" style="top:193.61px;font-size:17.00px;line-height:17.00px;color:#f2f2f2;left:1725.00px;transform:scaleX(1.1007);transform-origin:0 0;">Sort &amp;</div>
<div class="t" style="top:217.61px;font-size:17.00px;line-height:17.00px;color:#f2f2f2;left:1724.00px;transform:scaleX(0.9265);transform-origin:0 0;">Filter</div>
<svg class="r" style="left:1770.48px;top:223.00px;" width="9.04" height="6.14" viewBox="0 0 9.04 6.14"><path d="M1.80 1.6 L4.52 4.74 L7.24 1.6" fill="none" stroke="#e0e0e0" stroke-width="1.9" stroke-linecap="round" stroke-linejoin="round"/></svg>
<svg class="r" style="left:1797.00px;top:140.00px;" width="47.00" height="46.00" viewBox="0 0 47.00 46.00"><circle cx="30" cy="16" r="14" fill="none" stroke="#d8d8d8" stroke-width="1.8"/><path d="M20 26 L2 44" stroke="#d8d8d8" stroke-width="1.8" stroke-linecap="round"/></svg>
<div class="t" style="top:193.61px;font-size:17.00px;line-height:17.00px;color:#f2f2f2;left:1795.00px;transform:scaleX(1.0787);transform-origin:0 0;">Find &amp;</div>
<div class="t" style="top:217.61px;font-size:17.00px;line-height:17.00px;color:#f2f2f2;left:1790.00px;transform:scaleX(0.9736);transform-origin:0 0;">Select</div>
<svg class="r" style="left:1842.48px;top:223.00px;" width="9.04" height="6.14" viewBox="0 0 9.04 6.14"><path d="M1.80 1.6 L4.52 4.74 L7.24 1.6" fill="none" stroke="#e0e0e0" stroke-width="1.9" stroke-linecap="round" stroke-linejoin="round"/></svg>
<div class="t" style="top:254.38px;font-size:15.50px;line-height:15.50px;color:#f2f2f2;left:1682.50px;transform:scaleX(0.9938);transform-origin:0 0;">Editing</div>
<div class="r" style="left:1868.30px;top:135.00px;width:1.00px;height:133.00px;background:#4a4a4a;"></div>
<svg class="r" style="left:1894.00px;top:140.00px;" width="44.00" height="44.00" viewBox="0 0 44.00 44.00"><rect x="1.5" y="1.5" width="41" height="41" fill="none" stroke="#d4562d" stroke-width="2.6"/><rect x="7" y="7" width="13" height="13" fill="none" stroke="#d4562d" stroke-width="2.2"/><rect x="24" y="7" width="13" height="13" fill="none" stroke="#d4562d" stroke-width="2.2"/><rect x="7" y="24" width="13" height="13" fill="none" stroke="#d4562d" stroke-width="2.2"/><rect x="24" y="24" width="13" height="13" fill="none" stroke="#d4562d" stroke-width="2.2"/></svg>
<div class="t" style="top:193.41px;font-size:17.00px;line-height:17.00px;color:#f2f2f2;left:1885.00px;transform:scaleX(1.0930);transform-origin:0 0;">Add-ins</div>
<div class="t" style="top:254.38px;font-size:15.50px;line-height:15.50px;color:#f2f2f2;left:1888.00px;transform:scaleX(1.0085);transform-origin:0 0;">Add-ins</div>
<div class="r" style="left:1963.40px;top:135.00px;width:1.00px;height:133.00px;background:#4a4a4a;"></div>
<svg class="r" style="left:1988.00px;top:140.00px;" width="44.00" height="45.00" viewBox="0 0 44.00 45.00"><rect x="1" y="1" width="42" height="42" fill="none" stroke="#c8c8c8" stroke-width="1.8"/><path d="M1 6 H43" stroke="#9a9a9a" stroke-width="4"/><path d="M1 20 H43 M1 31 H43 M14 1 V43 M29 1 V43" stroke="#8a8a8a" stroke-width="1.4"/><circle cx="18" cy="19" r="11" fill="#292929" stroke="#d8d8d8" stroke-width="1.8"/><path d="M26 27 L42 43" stroke="#d8d8d8" stroke-width="1.8"/><rect x="13" y="18" width="3" height="6" fill="#a0a0a0"/><rect x="17" y="13" width="3" height="11" fill="#d8d8d8"/><rect x="21" y="16" width="3" height="8" fill="#3d9be0"/></svg>
<div class="t" style="top:193.41px;font-size:17.00px;line-height:17.00px;color:#f2f2f2;left:1980.00px;transform:scaleX(1.0086);transform-origin:0 0;">Analyze</div>
<div class="t" style="top:217.61px;font-size:17.00px;line-height:17.00px;color:#f2f2f2;left:1992.00px;transform:scaleX(1.0025);transform-origin:0 0;">Data</div>
<div class="r" style="left:2056.50px;top:135.00px;width:1.00px;height:133.00px;background:#4a4a4a;"></div>
<div class="r" style="left:2156.5px;top:143px;width:112px;height:112px;border-radius:50%;background:#ffffff;"></div>
<svg class="r" style="left:2182.00px;top:173.00px;" width="61.00" height="53.00" viewBox="0 0 61.00 53.00"><rect x="0" y="0" width="61" height="52.5" fill="#5b5fe3"/><rect x="7" y="8.5" width="20.5" height="14.5" fill="#fff"/><rect x="33.5" y="8.5" width="20.5" height="14.5" fill="#fff"/><rect x="7" y="29.5" width="20.5" height="14.5" fill="#fff"/><rect x="33.5" y="29.5" width="20.5" height="14.5" fill="#fff"/></svg>
<div class="t" style="top:154.25px;font-size:50.50px;line-height:50.50px;color:#ffffff;font-weight:bold;left:2295.60px;transform:scaleX(0.9237);transform-origin:0 0;-webkit-text-stroke:1.2px #ffffff;">FINM</div>
<div class="t" style="top:154.25px;font-size:50.50px;line-height:50.50px;color:#ffffff;font-weight:bold;left:2456.00px;transform:scaleX(0.8177);transform-origin:0 0;-webkit-text-stroke:1.2px #ffffff;">DELSLAB</div>
<svg class="r" style="left:2412.00px;top:152.00px;" width="40.00" height="48.00" viewBox="0 0 40.00 48.00"><path d="M12.5 14.5 A13.2 13.2 0 1 0 26.5 14.5" fill="none" stroke="#fff" stroke-width="8.6"/><rect x="15.3" y="3" width="8.4" height="26.5" rx="4.2" fill="#fff"/></svg>
<div class="t" style="top:209.04px;font-size:33.50px;line-height:33.50px;color:#ffffff;left:2296.00px;letter-spacing:25.54px;-webkit-text-stroke:0.3px #ffffff;">Templates</div>
<svg class="r" style="left:2848.96px;top:251.50px;" width="16.08" height="10.28" viewBox="0 0 16.08 10.28"><path d="M1.80 1.6 L8.04 8.88 L14.28 1.6" fill="none" stroke="#e0e0e0" stroke-width="2.2" stroke-linecap="round" stroke-linejoin="round"/></svg>
<div class="r" style="left:11.00px;top:278.00px;width:2849.00px;height:27.00px;background:#0a0a0a;"></div>
<svg class="r" style="left:30.00px;top:282.00px;" width="21.00" height="21.00" viewBox="0 0 21.00 21.00"><path d="M20 0 V20 H0 Z" fill="#6a6a6a"/></svg>
<div class="r" style="left:53.00px;top:278.00px;width:35.00px;height:27.00px;background:#6b6b6b;"></div>
<div class="r" style="left:88.00px;top:279.00px;width:1.00px;height:26.00px;background:#555555;"></div>
<div class="t" style="top:281.80px;font-size:21.50px;line-height:21.50px;color:#f0f0f0;left:-429.50px;width:1000px;text-align:center;">A</div>
<div class="r" style="left:137.50px;top:279.00px;width:1.00px;height:26.00px;background:#555555;"></div>
<div class="t" style="top:281.80px;font-size:21.50px;line-height:21.50px;color:#f0f0f0;left:-387.25px;width:1000px;text-align:center;">B</div>
<div class="r" style="left:407.00px;top:279.00px;width:1.00px;height:26.00px;background:#555555;"></div>
<div class="t" style="top:281.80px;font-size:21.50px;line-height:21.50px;color:#f0f0f0;left:-227.75px;width:1000px;text-align:center;">C</div>
<div class="r" style="left:677.00px;top:279.00px;width:1.00px;height:26.00px;background:#555555;"></div>
<div class="t" style="top:281.80px;font-size:21.50px;line-height:21.50px;color:#f0f0f0;left:42.00px;width:1000px;text-align:center;">D</div>
<div class="r" style="left:947.00px;top:279.00px;width:1.00px;height:26.00px;background:#555555;"></div>
<div class="t" style="top:281.80px;font-size:21.50px;line-height:21.50px;color:#f0f0f0;left:312.00px;width:1000px;text-align:center;">E</div>
<div class="r" style="left:1153.00px;top:279.00px;width:1.00px;height:26.00px;background:#555555;"></div>
<div class="t" style="top:281.80px;font-size:21.50px;line-height:21.50px;color:#f0f0f0;left:550.00px;width:1000px;text-align:center;">F</div>
<div class="r" style="left:1359.00px;top:279.00px;width:1.00px;height:26.00px;background:#555555;"></div>
<div class="t" style="top:281.80px;font-size:21.50px;line-height:21.50px;color:#f0f0f0;left:756.00px;width:1000px;text-align:center;">G</div>
<div class="r" style="left:1566.00px;top:279.00px;width:1.00px;height:26.00px;background:#555555;"></div>
<div class="t" style="top:281.80px;font-size:21.50px;line-height:21.50px;color:#f0f0f0;left:962.50px;width:1000px;text-align:center;">H</div>
<div class="r" style="left:1773.00px;top:279.00px;width:1.00px;height:26.00px;background:#555555;"></div>
<div class="t" style="top:281.80px;font-size:21.50px;line-height:21.50px;color:#f0f0f0;left:1169.50px;width:1000px;text-align:center;">I</div>
<div class="r" style="left:1942.00px;top:279.00px;width:1.00px;height:26.00px;background:#555555;"></div>
<div class="t" style="top:281.80px;font-size:21.50px;line-height:21.50px;color:#f0f0f0;left:1357.50px;width:1000px;text-align:center;">J</div>
<div class="r" style="left:2111.00px;top:279.00px;width:1.00px;height:26.00px;background:#555555;"></div>
<div class="t" style="top:281.80px;font-size:21.50px;line-height:21.50px;color:#f0f0f0;left:1526.50px;width:1000px;text-align:center;">K</div>
<div class="r" style="left:2280.00px;top:279.00px;width:1.00px;height:26.00px;background:#555555;"></div>
<div class="t" style="top:281.80px;font-size:21.50px;line-height:21.50px;color:#f0f0f0;left:1695.50px;width:1000px;text-align:center;">L</div>
<div class="r" style="left:2449.00px;top:279.00px;width:1.00px;height:26.00px;background:#555555;"></div>
<div class="t" style="top:281.80px;font-size:21.50px;line-height:21.50px;color:#f0f0f0;left:1864.50px;width:1000px;text-align:center;">M</div>
<div class="r" style="left:2618.00px;top:279.00px;width:1.00px;height:26.00px;background:#555555;"></div>
<div class="t" style="top:281.80px;font-size:21.50px;line-height:21.50px;color:#f0f0f0;left:2033.50px;width:1000px;text-align:center;">N</div>
<div class="r" style="left:2787.00px;top:279.00px;width:1.00px;height:26.00px;background:#555555;"></div>
<div class="t" style="top:281.80px;font-size:21.50px;line-height:21.50px;color:#f0f0f0;left:2202.50px;width:1000px;text-align:center;">O</div>
<div class="r" style="left:52.50px;top:278.00px;width:1.20px;height:27.00px;background:#9a9a9a;"></div>
<div class="r" style="left:87.60px;top:278.00px;width:1.20px;height:27.00px;background:#9a9a9a;"></div>
<div class="r" style="left:11.00px;top:304.00px;width:2849.00px;height:1.00px;background:#050505;"></div>
<div class="r" style="left:11.00px;top:305.00px;width:42.00px;height:1365.00px;background:#0a0a0a;"></div>
<div class="r" style="left:11.00px;top:305.00px;width:42.00px;height:49.50px;background:#6b6b6b;"></div>
<div class="r" style="left:11.00px;top:354.00px;width:42.00px;height:1.00px;background:#555555;"></div>
<div class="t" style="top:331.10px;font-size:21.50px;line-height:21.50px;color:#f0f0f0;left:-468.00px;width:1000px;text-align:center;">1</div>
<div class="r" style="left:11.00px;top:395.80px;width:42.00px;height:1.00px;background:#555555;"></div>
<div class="t" style="top:372.90px;font-size:21.50px;line-height:21.50px;color:#f0f0f0;left:-468.00px;width:1000px;text-align:center;">2</div>
<div class="r" style="left:11.00px;top:424.10px;width:42.00px;height:1.00px;background:#555555;"></div>
<div class="t" style="top:401.20px;font-size:21.50px;line-height:21.50px;color:#f0f0f0;left:-468.00px;width:1000px;text-align:center;">3</div>
<div class="r" style="left:11.00px;top:456.00px;width:42.00px;height:1.00px;background:#555555;"></div>
<div class="t" style="top:433.10px;font-size:21.50px;line-height:21.50px;color:#f0f0f0;left:-468.00px;width:1000px;text-align:center;">4</div>
<div class="r" style="left:11.00px;top:485.90px;width:42.00px;height:1.00px;background:#555555;"></div>
<div class="t" style="top:463.00px;font-size:21.50px;line-height:21.50px;color:#f0f0f0;left:-468.00px;width:1000px;text-align:center;">6</div>
<div class="r" style="left:11.00px;top:512.30px;width:42.00px;height:1.00px;background:#555555;"></div>
<div class="t" style="top:489.40px;font-size:21.50px;line-height:21.50px;color:#f0f0f0;left:-468.00px;width:1000px;text-align:center;">7</div>
<div class="r" style="left:11.00px;top:541.80px;width:42.00px;height:1.00px;background:#555555;"></div>
<div class="t" style="top:518.90px;font-size:21.50px;line-height:21.50px;color:#f0f0f0;left:-468.00px;width:1000px;text-align:center;">13</div>
<div class="r" style="left:11.00px;top:590.80px;width:42.00px;height:1.00px;background:#555555;"></div>
<div class="t" style="top:567.90px;font-size:21.50px;line-height:21.50px;color:#f0f0f0;left:-468.00px;width:1000px;text-align:center;">14</div>
<div class="r" style="left:11.00px;top:616.00px;width:42.00px;height:1.00px;background:#555555;"></div>
<div class="t" style="top:593.10px;font-size:21.50px;line-height:21.50px;color:#f0f0f0;left:-468.00px;width:1000px;text-align:center;">15</div>
<div class="r" style="left:11.00px;top:651.00px;width:42.00px;height:1.00px;background:#555555;"></div>
<div class="t" style="top:628.10px;font-size:21.50px;line-height:21.50px;color:#f0f0f0;left:-468.00px;width:1000px;text-align:center;">16</div>
<div class="r" style="left:11.00px;top:679.05px;width:42.00px;height:1.00px;background:#555555;"></div>
<div class="t" style="top:656.15px;font-size:21.50px;line-height:21.50px;color:#f0f0f0;left:-468.00px;width:1000px;text-align:center;">17</div>
<div class="r" style="left:11.00px;top:707.10px;width:42.00px;height:1.00px;background:#555555;"></div>
<div class="t" style="top:684.20px;font-size:21.50px;line-height:21.50px;color:#f0f0f0;left:-468.00px;width:1000px;text-align:center;">18</div>
<div class="r" style="left:11.00px;top:735.15px;width:42.00px;height:1.00px;background:#555555;"></div>
<div class="t" style="top:712.25px;font-size:21.50px;line-height:21.50px;color:#f0f0f0;left:-468.00px;width:1000px;text-align:center;">19</div>
<div class="r" style="left:11.00px;top:763.20px;width:42.00px;height:1.00px;background:#555555;"></div>
<div class="t" style="top:740.30px;font-size:21.50px;line-height:21.50px;color:#f0f0f0;left:-468.00px;width:1000px;text-align:center;">20</div>
<div class="r" style="left:11.00px;top:791.25px;width:42.00px;height:1.00px;background:#555555;"></div>
<div class="t" style="top:768.35px;font-size:21.50px;line-height:21.50px;color:#f0f0f0;left:-468.00px;width:1000px;text-align:center;">21</div>
<div class="r" style="left:11.00px;top:819.30px;width:42.00px;height:1.00px;background:#555555;"></div>
<div class="t" style="top:796.40px;font-size:21.50px;line-height:21.50px;color:#f0f0f0;left:-468.00px;width:1000px;text-align:center;">22</div>
<div class="r" style="left:11.00px;top:847.35px;width:42.00px;height:1.00px;background:#555555;"></div>
<div class="t" style="top:824.45px;font-size:21.50px;line-height:21.50px;color:#f0f0f0;left:-468.00px;width:1000px;text-align:center;">23</div>
<div class="r" style="left:11.00px;top:875.40px;width:42.00px;height:1.00px;background:#555555;"></div>
<div class="t" style="top:852.50px;font-size:21.50px;line-height:21.50px;color:#f0f0f0;left:-468.00px;width:1000px;text-align:center;">24</div>
<div class="r" style="left:11.00px;top:903.45px;width:42.00px;height:1.00px;background:#555555;"></div>
<div class="t" style="top:880.55px;font-size:21.50px;line-height:21.50px;color:#f0f0f0;left:-468.00px;width:1000px;text-align:center;">25</div>
<div class="r" style="left:11.00px;top:931.50px;width:42.00px;height:1.00px;background:#555555;"></div>
<div class="t" style="top:908.60px;font-size:21.50px;line-height:21.50px;color:#f0f0f0;left:-468.00px;width:1000px;text-align:center;">26</div>
<div class="r" style="left:11.00px;top:959.55px;width:42.00px;height:1.00px;background:#555555;"></div>
<div class="t" style="top:936.65px;font-size:21.50px;line-height:21.50px;color:#f0f0f0;left:-468.00px;width:1000px;text-align:center;">27</div>
<div class="r" style="left:11.00px;top:987.60px;width:42.00px;height:1.00px;background:#555555;"></div>
<div class="t" style="top:964.70px;font-size:21.50px;line-height:21.50px;color:#f0f0f0;left:-468.00px;width:1000px;text-align:center;">28</div>
<div class="r" style="left:11.00px;top:1015.65px;width:42.00px;height:1.00px;background:#555555;"></div>
<div class="t" style="top:992.75px;font-size:21.50px;line-height:21.50px;color:#f0f0f0;left:-468.00px;width:1000px;text-align:center;">29</div>
<div class="r" style="left:11.00px;top:1043.70px;width:42.00px;height:1.00px;background:#555555;"></div>
<div class="t" style="top:1020.80px;font-size:21.50px;line-height:21.50px;color:#f0f0f0;left:-468.00px;width:1000px;text-align:center;">30</div>
<div class="r" style="left:11.00px;top:1071.75px;width:42.00px;height:1.00px;background:#555555;"></div>
<div class="t" style="top:1048.85px;font-size:21.50px;line-height:21.50px;color:#f0f0f0;left:-468.00px;width:1000px;text-align:center;">31</div>
<div class="r" style="left:11.00px;top:1099.80px;width:42.00px;height:1.00px;background:#555555;"></div>
<div class="t" style="top:1076.90px;font-size:21.50px;line-height:21.50px;color:#f0f0f0;left:-468.00px;width:1000px;text-align:center;">32</div>
<div class="r" style="left:11.00px;top:1127.85px;width:42.00px;height:1.00px;background:#555555;"></div>
<div class="t" style="top:1104.95px;font-size:21.50px;line-height:21.50px;color:#f0f0f0;left:-468.00px;width:1000px;text-align:center;">33</div>
<div class="r" style="left:11.00px;top:1155.90px;width:42.00px;height:1.00px;background:#555555;"></div>
<div class="t" style="top:1133.00px;font-size:21.50px;line-height:21.50px;color:#f0f0f0;left:-468.00px;width:1000px;text-align:center;">34</div>
<div class="r" style="left:11.00px;top:1183.95px;width:42.00px;height:1.00px;background:#555555;"></div>
<div class="t" style="top:1161.05px;font-size:21.50px;line-height:21.50px;color:#f0f0f0;left:-468.00px;width:1000px;text-align:center;">35</div>
<div class="r" style="left:11.00px;top:1212.00px;width:42.00px;height:1.00px;background:#555555;"></div>
<div class="t" style="top:1189.10px;font-size:21.50px;line-height:21.50px;color:#f0f0f0;left:-468.00px;width:1000px;text-align:center;">36</div>
<div class="r" style="left:11.00px;top:1247.10px;width:42.00px;height:1.00px;background:#555555;"></div>
<div class="t" style="top:1224.20px;font-size:21.50px;line-height:21.50px;color:#f0f0f0;left:-468.00px;width:1000px;text-align:center;">37</div>
<div class="r" style="left:11.00px;top:1275.20px;width:42.00px;height:1.00px;background:#555555;"></div>
<div class="t" style="top:1252.30px;font-size:21.50px;line-height:21.50px;color:#f0f0f0;left:-468.00px;width:1000px;text-align:center;">38</div>
<div class="r" style="left:11.00px;top:1302.80px;width:42.00px;height:1.00px;background:#555555;"></div>
<div class="t" style="top:1279.90px;font-size:21.50px;line-height:21.50px;color:#f0f0f0;left:-468.00px;width:1000px;text-align:center;">39</div>
<div class="r" style="left:11.00px;top:1345.00px;width:42.00px;height:1.00px;background:#555555;"></div>
<div class="t" style="top:1322.10px;font-size:21.50px;line-height:21.50px;color:#f0f0f0;left:-468.00px;width:1000px;text-align:center;">40</div>
<div class="r" style="left:11.00px;top:1373.00px;width:42.00px;height:1.00px;background:#555555;"></div>
<div class="t" style="top:1350.10px;font-size:21.50px;line-height:21.50px;color:#f0f0f0;left:-468.00px;width:1000px;text-align:center;">41</div>
<div class="r" style="left:11.00px;top:1401.10px;width:42.00px;height:1.00px;background:#555555;"></div>
<div class="t" style="top:1378.20px;font-size:21.50px;line-height:21.50px;color:#f0f0f0;left:-468.00px;width:1000px;text-align:center;">42</div>
<div class="r" style="left:11.00px;top:1429.10px;width:42.00px;height:1.00px;background:#555555;"></div>
<div class="t" style="top:1406.20px;font-size:21.50px;line-height:21.50px;color:#f0f0f0;left:-468.00px;width:1000px;text-align:center;">43</div>
<div class="r" style="left:11.00px;top:1456.80px;width:42.00px;height:1.00px;background:#555555;"></div>
<div class="t" style="top:1433.90px;font-size:21.50px;line-height:21.50px;color:#f0f0f0;left:-468.00px;width:1000px;text-align:center;">44</div>
<div class="r" style="left:11.00px;top:1485.00px;width:42.00px;height:1.00px;background:#555555;"></div>
<div class="t" style="top:1462.10px;font-size:21.50px;line-height:21.50px;color:#f0f0f0;left:-468.00px;width:1000px;text-align:center;">45</div>
<div class="r" style="left:11.00px;top:1527.00px;width:42.00px;height:1.00px;background:#555555;"></div>
<div class="t" style="top:1504.10px;font-size:21.50px;line-height:21.50px;color:#f0f0f0;left:-468.00px;width:1000px;text-align:center;">46</div>
<div class="r" style="left:11.00px;top:1555.00px;width:42.00px;height:1.00px;background:#555555;"></div>
<div class="t" style="top:1532.10px;font-size:21.50px;line-height:21.50px;color:#f0f0f0;left:-468.00px;width:1000px;text-align:center;">47</div>
<div class="r" style="left:11.00px;top:1582.80px;width:42.00px;height:1.00px;background:#555555;"></div>
<div class="t" style="top:1559.90px;font-size:21.50px;line-height:21.50px;color:#f0f0f0;left:-468.00px;width:1000px;text-align:center;">48</div>
<div class="r" style="left:11.00px;top:1611.20px;width:42.00px;height:1.00px;background:#555555;"></div>
<div class="t" style="top:1588.30px;font-size:21.50px;line-height:21.50px;color:#f0f0f0;left:-468.00px;width:1000px;text-align:center;">49</div>
<div class="r" style="left:11.00px;top:1653.00px;width:42.00px;height:1.00px;background:#555555;"></div>
<div class="t" style="top:1630.10px;font-size:21.50px;line-height:21.50px;color:#f0f0f0;left:-468.00px;width:1000px;text-align:center;">50</div>
<div class="r" style="left:11.00px;top:304.60px;width:42.00px;height:1.20px;background:#c0c0c0;"></div>
<div class="r" style="left:11.00px;top:354.00px;width:42.00px;height:1.20px;background:#c0c0c0;"></div>
<div class="r" style="left:11.00px;top:460.00px;width:42.00px;height:1.00px;background:#555555;"></div>
<div class="r" style="left:11.00px;top:516.30px;width:42.00px;height:1.00px;background:#555555;"></div>
<div class="r" style="left:53.00px;top:305.00px;width:2807.00px;height:1365.00px;background:#ffffff;"></div>
<div class="r" style="left:53.00px;top:305.00px;width:2807.00px;height:1.00px;background:#c4c4c4;"></div>
<div class="r" style="left:52.00px;top:304.00px;width:37.00px;height:2.00px;background:#217346;"></div>
<div class="r" style="left:52.00px;top:304.00px;width:2.00px;height:51.00px;background:#217346;"></div>
<div class="t" style="top:312.83px;font-size:38.00px;line-height:38.00px;color:#222222;font-weight:bold;-webkit-text-stroke:0.77px #222222;left:95.20px;transform:scaleX(1.0538);transform-origin:0 0;">Startup Costs (CAPEX)</div>
<div class="t" style="top:360.77px;font-size:33.00px;line-height:33.00px;color:#000;font-weight:bold;-webkit-text-stroke:0.74px #000;left:94.20px;transform:scaleX(1.0521);transform-origin:0 0;">ABC Company Inc.</div>
<div class="t" style="top:400.07px;font-size:20.00px;line-height:20.00px;color:#2a7de6;font-weight:bold;-webkit-text-stroke:0.45px #2a7de6;left:92.60px;transform:scaleX(1.1431);transform-origin:0 0;">Go to Table of Contents</div>
<div class="r" style="left:92.60px;top:419.50px;width:257.40px;height:2.00px;background:#2a7de6;"></div>
<div class="t" style="top:463.15px;font-size:20.50px;line-height:20.50px;color:#000;font-weight:bold;-webkit-text-stroke:0.46px #000;left:93.00px;transform:scaleX(1.1146);transform-origin:0 0;">Fiscal Year</div>
<div class="t" style="top:491.45px;font-size:20.50px;line-height:20.50px;color:#000;font-weight:bold;-webkit-text-stroke:0.46px #000;left:93.00px;transform:scaleX(1.1225);transform-origin:0 0;">Month</div>
<div class="r" style="left:53.00px;top:514.00px;width:2807.00px;height:1.00px;background:#9a9a9a;"></div>
<div class="t" style="top:463.15px;font-size:20.50px;line-height:20.50px;color:#000;font-weight:bold;-webkit-text-stroke:0.46px #000;right:1134.50px;transform:scaleX(1.1750);transform-origin:100% 0;">2025</div>
<div class="t" style="top:491.45px;font-size:20.50px;line-height:20.50px;color:#000;font-weight:bold;-webkit-text-stroke:0.46px #000;right:1134.50px;transform:scaleX(1.1500);transform-origin:100% 0;">Dec-25</div>
<div class="t" style="top:463.15px;font-size:20.50px;line-height:20.50px;color:#000;font-weight:bold;-webkit-text-stroke:0.46px #000;right:965.50px;transform:scaleX(1.1750);transform-origin:100% 0;">2026</div>
<div class="t" style="top:491.45px;font-size:20.50px;line-height:20.50px;color:#000;font-weight:bold;-webkit-text-stroke:0.46px #000;right:965.50px;transform:scaleX(1.1500);transform-origin:100% 0;">Jan-26</div>
<div class="t" style="top:463.15px;font-size:20.50px;line-height:20.50px;color:#000;font-weight:bold;-webkit-text-stroke:0.46px #000;right:796.50px;transform:scaleX(1.1750);transform-origin:100% 0;">2026</div>
<div class="t" style="top:491.45px;font-size:20.50px;line-height:20.50px;color:#000;font-weight:bold;-webkit-text-stroke:0.46px #000;right:796.50px;transform:scaleX(1.1500);transform-origin:100% 0;">Feb-26</div>
<div class="t" style="top:463.15px;font-size:20.50px;line-height:20.50px;color:#000;font-weight:bold;-webkit-text-stroke:0.46px #000;right:627.50px;transform:scaleX(1.1750);transform-origin:100% 0;">2026</div>
<div class="t" style="top:491.45px;font-size:20.50px;line-height:20.50px;color:#000;font-weight:bold;-webkit-text-stroke:0.46px #000;right:627.50px;transform:scaleX(1.1500);transform-origin:100% 0;">Mar-26</div>
<div class="t" style="top:463.15px;font-size:20.50px;line-height:20.50px;color:#000;font-weight:bold;-webkit-text-stroke:0.46px #000;right:458.50px;transform:scaleX(1.1750);transform-origin:100% 0;">2026</div>
<div class="t" style="top:491.45px;font-size:20.50px;line-height:20.50px;color:#000;font-weight:bold;-webkit-text-stroke:0.46px #000;right:458.50px;transform:scaleX(1.1500);transform-origin:100% 0;">Apr-26</div>
<div class="t" style="top:463.15px;font-size:20.50px;line-height:20.50px;color:#000;font-weight:bold;-webkit-text-stroke:0.46px #000;right:289.50px;transform:scaleX(1.1750);transform-origin:100% 0;">2026</div>
<div class="t" style="top:491.45px;font-size:20.50px;line-height:20.50px;color:#000;font-weight:bold;-webkit-text-stroke:0.46px #000;right:289.50px;transform:scaleX(1.1500);transform-origin:100% 0;">May-26</div>
<div class="t" style="top:463.15px;font-size:20.50px;line-height:20.50px;color:#000;font-weight:bold;-webkit-text-stroke:0.46px #000;right:120.50px;transform:scaleX(1.1750);transform-origin:100% 0;">2026</div>
<div class="t" style="top:491.45px;font-size:20.50px;line-height:20.50px;color:#000;font-weight:bold;-webkit-text-stroke:0.46px #000;right:120.50px;transform:scaleX(1.1500);transform-origin:100% 0;">Jun-26</div>
<div class="t" style="top:549.43px;font-size:38.00px;line-height:38.00px;color:#222222;font-weight:bold;-webkit-text-stroke:0.77px #222222;left:95.30px;transform:scaleX(1.0639);transform-origin:0 0;">Startup Costs, $</div>
<div class="r" style="left:137.50px;top:617.00px;width:1635.50px;height:32.80px;background:#6b74e6;"></div>
<div class="r" style="left:946.40px;top:617.00px;width:1.20px;height:32.80px;background:#ffffff;"></div>
<div class="r" style="left:1152.40px;top:617.00px;width:1.20px;height:32.80px;background:#ffffff;"></div>
<div class="r" style="left:1358.40px;top:617.00px;width:1.20px;height:32.80px;background:#ffffff;"></div>
<div class="r" style="left:1565.40px;top:617.00px;width:1.20px;height:32.80px;background:#ffffff;"></div>
<div class="t" style="top:623.85px;font-size:20.50px;line-height:20.50px;color:#ffffff;font-weight:bold;-webkit-text-stroke:0.46px #ffffff;left:42.25px;width:1000px;text-align:center;transform:scaleX(1.1200);transform-origin:50% 0;">Categories</div>
<div class="t" style="top:623.85px;font-size:20.50px;line-height:20.50px;color:#ffffff;font-weight:bold;-webkit-text-stroke:0.46px #ffffff;left:550.00px;width:1000px;text-align:center;transform:scaleX(1.1200);transform-origin:50% 0;">Launch date</div>
<div class="t" style="top:623.85px;font-size:20.50px;line-height:20.50px;color:#ffffff;font-weight:bold;-webkit-text-stroke:0.46px #ffffff;left:756.00px;width:1000px;text-align:center;transform:scaleX(1.1200);transform-origin:50% 0;">End date</div>
<div class="t" style="top:623.85px;font-size:20.50px;line-height:20.50px;color:#ffffff;font-weight:bold;-webkit-text-stroke:0.46px #ffffff;left:962.50px;width:1000px;text-align:center;transform:scaleX(1.1200);transform-origin:50% 0;">Spending, $</div>
<div class="t" style="top:623.85px;font-size:20.50px;line-height:20.50px;color:#ffffff;font-weight:bold;-webkit-text-stroke:0.46px #ffffff;left:1169.50px;width:1000px;text-align:center;transform:scaleX(1.1200);transform-origin:50% 0;">Amortizable?</div>
<div class="r" style="left:138.00px;top:651.50px;width:1635.00px;height:561.00px;background:#fff068;"></div>
<div class="r" style="left:137.50px;top:649.70px;width:1635.50px;height:3.50px;background:#ffffff;"></div>
<div class="r" style="left:138.00px;top:679.90px;width:1635.00px;height:1.70px;background:#ffffff;"></div>
<div class="r" style="left:138.00px;top:707.95px;width:1635.00px;height:1.70px;background:#ffffff;"></div>
<div class="r" style="left:138.00px;top:736.00px;width:1635.00px;height:1.70px;background:#ffffff;"></div>
<div class="r" style="left:138.00px;top:764.05px;width:1635.00px;height:1.70px;background:#ffffff;"></div>
<div class="r" style="left:138.00px;top:792.10px;width:1635.00px;height:1.70px;background:#ffffff;"></div>
<div class="r" style="left:138.00px;top:820.15px;width:1635.00px;height:1.70px;background:#ffffff;"></div>
<div class="r" style="left:138.00px;top:848.20px;width:1635.00px;height:1.70px;background:#ffffff;"></div>
<div class="r" style="left:138.00px;top:876.25px;width:1635.00px;height:1.70px;background:#ffffff;"></div>
<div class="r" style="left:138.00px;top:904.30px;width:1635.00px;height:1.70px;background:#ffffff;"></div>
<div class="r" style="left:138.00px;top:932.35px;width:1635.00px;height:1.70px;background:#ffffff;"></div>
<div class="r" style="left:138.00px;top:960.40px;width:1635.00px;height:1.70px;background:#ffffff;"></div>
<div class="r" style="left:138.00px;top:988.45px;width:1635.00px;height:1.70px;background:#ffffff;"></div>
<div class="r" style="left:138.00px;top:1016.50px;width:1635.00px;height:1.70px;background:#ffffff;"></div>
<div class="r" style="left:138.00px;top:1044.55px;width:1635.00px;height:1.70px;background:#ffffff;"></div>
<div class="r" style="left:138.00px;top:1072.60px;width:1635.00px;height:1.70px;background:#ffffff;"></div>
<div class="r" style="left:138.00px;top:1100.65px;width:1635.00px;height:1.70px;background:#ffffff;"></div>
<div class="r" style="left:138.00px;top:1128.70px;width:1635.00px;height:1.70px;background:#ffffff;"></div>
<div class="r" style="left:138.00px;top:1156.75px;width:1635.00px;height:1.70px;background:#ffffff;"></div>
<div class="r" style="left:138.00px;top:1184.80px;width:1635.00px;height:1.70px;background:#ffffff;"></div>
<div class="r" style="left:945.40px;top:651.50px;width:3.20px;height:561.00px;background:#ffffff;"></div>
<div class="r" style="left:1151.40px;top:651.50px;width:3.20px;height:561.00px;background:#ffffff;"></div>
<div class="r" style="left:1357.40px;top:651.50px;width:3.20px;height:561.00px;background:#ffffff;"></div>
<div class="r" style="left:1564.40px;top:651.50px;width:3.20px;height:561.00px;background:#ffffff;"></div>
<div class="t" style="top:655.65px;font-size:20.50px;line-height:20.50px;color:#111111;left:140.80px;transform:scaleX(1.0600);transform-origin:0 0;">Commercial Waffle Irons</div>
<div class="t" style="top:655.65px;font-size:20.50px;line-height:20.50px;color:#111111;left:550.00px;width:1000px;text-align:center;transform:scaleX(1.0600);transform-origin:50% 0;">Jan-26</div>
<div class="t" style="top:655.65px;font-size:20.50px;line-height:20.50px;color:#111111;left:756.00px;width:1000px;text-align:center;transform:scaleX(1.0600);transform-origin:50% 0;">Jan-26</div>
<div class="t" style="top:655.65px;font-size:20.50px;line-height:20.50px;color:#111111;right:1348.00px;transform:scaleX(1.0600);transform-origin:100% 0;">8,000</div>
<div class="t" style="top:655.65px;font-size:20.50px;line-height:20.50px;color:#111111;left:1169.50px;width:1000px;text-align:center;transform:scaleX(1.0600);transform-origin:50% 0;">Yes</div>
<div class="t" style="top:655.65px;font-size:20.50px;line-height:20.50px;color:#111111;right:972.00px;transform:scaleX(1.0600);transform-origin:100% 0;">8,000</div>
<div class="t" style="top:655.65px;font-size:20.50px;line-height:20.50px;color:#111111;right:826.50px;transform:scaleX(1.1000);transform-origin:100% 0;">-</div>
<div class="t" style="top:655.65px;font-size:20.50px;line-height:20.50px;color:#111111;right:657.50px;transform:scaleX(1.1000);transform-origin:100% 0;">-</div>
<div class="t" style="top:655.65px;font-size:20.50px;line-height:20.50px;color:#111111;right:488.50px;transform:scaleX(1.1000);transform-origin:100% 0;">-</div>
<div class="t" style="top:655.65px;font-size:20.50px;line-height:20.50px;color:#111111;right:319.50px;transform:scaleX(1.1000);transform-origin:100% 0;">-</div>
<div class="t" style="top:655.65px;font-size:20.50px;line-height:20.50px;color:#111111;right:150.50px;transform:scaleX(1.1000);transform-origin:100% 0;">-</div>
<div class="t" style="top:683.70px;font-size:20.50px;line-height:20.50px;color:#111111;left:140.80px;transform:scaleX(1.0600);transform-origin:0 0;">Ice Cream Machine</div>
<div class="t" style="top:683.70px;font-size:20.50px;line-height:20.50px;color:#111111;left:550.00px;width:1000px;text-align:center;transform:scaleX(1.0600);transform-origin:50% 0;">Jan-26</div>
<div class="t" style="top:683.70px;font-size:20.50px;line-height:20.50px;color:#111111;left:756.00px;width:1000px;text-align:center;transform:scaleX(1.0600);transform-origin:50% 0;">Feb-26</div>
<div class="t" style="top:683.70px;font-size:20.50px;line-height:20.50px;color:#111111;right:1348.00px;transform:scaleX(1.0600);transform-origin:100% 0;">12,000</div>
<div class="t" style="top:683.70px;font-size:20.50px;line-height:20.50px;color:#111111;left:1169.50px;width:1000px;text-align:center;transform:scaleX(1.0600);transform-origin:50% 0;">Yes</div>
<div class="t" style="top:683.70px;font-size:20.50px;line-height:20.50px;color:#111111;right:972.00px;transform:scaleX(1.0600);transform-origin:100% 0;">6,000</div>
<div class="t" style="top:683.70px;font-size:20.50px;line-height:20.50px;color:#111111;right:803.00px;transform:scaleX(1.0600);transform-origin:100% 0;">6,000</div>
<div class="t" style="top:683.70px;font-size:20.50px;line-height:20.50px;color:#111111;right:657.50px;transform:scaleX(1.1000);transform-origin:100% 0;">-</div>
<div class="t" style="top:683.70px;font-size:20.50px;line-height:20.50px;color:#111111;right:488.50px;transform:scaleX(1.1000);transform-origin:100% 0;">-</div>
<div class="t" style="top:683.70px;font-size:20.50px;line-height:20.50px;color:#111111;right:319.50px;transform:scaleX(1.1000);transform-origin:100% 0;">-</div>
<div class="t" style="top:683.70px;font-size:20.50px;line-height:20.50px;color:#111111;right:150.50px;transform:scaleX(1.1000);transform-origin:100% 0;">-</div>
<div class="t" style="top:711.75px;font-size:20.50px;line-height:20.50px;color:#111111;left:140.80px;transform:scaleX(1.0600);transform-origin:0 0;">Refrigeration Units</div>
<div class="t" style="top:711.75px;font-size:20.50px;line-height:20.50px;color:#111111;left:550.00px;width:1000px;text-align:center;transform:scaleX(1.0600);transform-origin:50% 0;">Jan-26</div>
<div class="t" style="top:711.75px;font-size:20.50px;line-height:20.50px;color:#111111;left:756.00px;width:1000px;text-align:center;transform:scaleX(1.0600);transform-origin:50% 0;">Mar-26</div>
<div class="t" style="top:711.75px;font-size:20.50px;line-height:20.50px;color:#111111;right:1348.00px;transform:scaleX(1.0600);transform-origin:100% 0;">7,000</div>
<div class="t" style="top:711.75px;font-size:20.50px;line-height:20.50px;color:#111111;left:1169.50px;width:1000px;text-align:center;transform:scaleX(1.0600);transform-origin:50% 0;">Yes</div>
<div class="t" style="top:711.75px;font-size:20.50px;line-height:20.50px;color:#111111;right:972.00px;transform:scaleX(1.0600);transform-origin:100% 0;">2,333</div>
<div class="t" style="top:711.75px;font-size:20.50px;line-height:20.50px;color:#111111;right:803.00px;transform:scaleX(1.0600);transform-origin:100% 0;">2,333</div>
<div class="t" style="top:711.75px;font-size:20.50px;line-height:20.50px;color:#111111;right:634.00px;transform:scaleX(1.0600);transform-origin:100% 0;">2,333</div>
<div class="t" style="top:711.75px;font-size:20.50px;line-height:20.50px;color:#111111;right:488.50px;transform:scaleX(1.1000);transform-origin:100% 0;">-</div>
<div class="t" style="top:711.75px;font-size:20.50px;line-height:20.50px;color:#111111;right:319.50px;transform:scaleX(1.1000);transform-origin:100% 0;">-</div>
<div class="t" style="top:711.75px;font-size:20.50px;line-height:20.50px;color:#111111;right:150.50px;transform:scaleX(1.1000);transform-origin:100% 0;">-</div>
<div class="t" style="top:739.80px;font-size:20.50px;line-height:20.50px;color:#111111;left:140.80px;transform:scaleX(1.0600);transform-origin:0 0;">POS System Hardware</div>
<div class="t" style="top:739.80px;font-size:20.50px;line-height:20.50px;color:#111111;left:550.00px;width:1000px;text-align:center;transform:scaleX(1.0600);transform-origin:50% 0;">Jan-26</div>
<div class="t" style="top:739.80px;font-size:20.50px;line-height:20.50px;color:#111111;left:756.00px;width:1000px;text-align:center;transform:scaleX(1.0600);transform-origin:50% 0;">Jan-26</div>
<div class="t" style="top:739.80px;font-size:20.50px;line-height:20.50px;color:#111111;right:1348.00px;transform:scaleX(1.0600);transform-origin:100% 0;">3,000</div>
<div class="t" style="top:739.80px;font-size:20.50px;line-height:20.50px;color:#111111;left:1169.50px;width:1000px;text-align:center;transform:scaleX(1.0600);transform-origin:50% 0;">Yes</div>
<div class="t" style="top:739.80px;font-size:20.50px;line-height:20.50px;color:#111111;right:972.00px;transform:scaleX(1.0600);transform-origin:100% 0;">3,000</div>
<div class="t" style="top:739.80px;font-size:20.50px;line-height:20.50px;color:#111111;right:826.50px;transform:scaleX(1.1000);transform-origin:100% 0;">-</div>
<div class="t" style="top:739.80px;font-size:20.50px;line-height:20.50px;color:#111111;right:657.50px;transform:scaleX(1.1000);transform-origin:100% 0;">-</div>
<div class="t" style="top:739.80px;font-size:20.50px;line-height:20.50px;color:#111111;right:488.50px;transform:scaleX(1.1000);transform-origin:100% 0;">-</div>
<div class="t" style="top:739.80px;font-size:20.50px;line-height:20.50px;color:#111111;right:319.50px;transform:scaleX(1.1000);transform-origin:100% 0;">-</div>
<div class="t" style="top:739.80px;font-size:20.50px;line-height:20.50px;color:#111111;right:150.50px;transform:scaleX(1.1000);transform-origin:100% 0;">-</div>
<div class="t" style="top:767.85px;font-size:20.50px;line-height:20.50px;color:#111111;left:140.80px;transform:scaleX(1.0600);transform-origin:0 0;">Shop Fit-out &amp; Seating</div>
<div class="t" style="top:767.85px;font-size:20.50px;line-height:20.50px;color:#111111;left:550.00px;width:1000px;text-align:center;transform:scaleX(1.0600);transform-origin:50% 0;">Jan-26</div>
<div class="t" style="top:767.85px;font-size:20.50px;line-height:20.50px;color:#111111;left:756.00px;width:1000px;text-align:center;transform:scaleX(1.0600);transform-origin:50% 0;">Apr-26</div>
<div class="t" style="top:767.85px;font-size:20.50px;line-height:20.50px;color:#111111;right:1348.00px;transform:scaleX(1.0600);transform-origin:100% 0;">45,000</div>
<div class="t" style="top:767.85px;font-size:20.50px;line-height:20.50px;color:#111111;left:1169.50px;width:1000px;text-align:center;transform:scaleX(1.0600);transform-origin:50% 0;">Yes</div>
<div class="t" style="top:767.85px;font-size:20.50px;line-height:20.50px;color:#111111;right:972.00px;transform:scaleX(1.0600);transform-origin:100% 0;">11,250</div>
<div class="t" style="top:767.85px;font-size:20.50px;line-height:20.50px;color:#111111;right:803.00px;transform:scaleX(1.0600);transform-origin:100% 0;">11,250</div>
<div class="t" style="top:767.85px;font-size:20.50px;line-height:20.50px;color:#111111;right:634.00px;transform:scaleX(1.0600);transform-origin:100% 0;">11,250</div>
<div class="t" style="top:767.85px;font-size:20.50px;line-height:20.50px;color:#111111;right:465.00px;transform:scaleX(1.0600);transform-origin:100% 0;">11,250</div>
<div class="t" style="top:767.85px;font-size:20.50px;line-height:20.50px;color:#111111;right:319.50px;transform:scaleX(1.1000);transform-origin:100% 0;">-</div>
<div class="t" style="top:767.85px;font-size:20.50px;line-height:20.50px;color:#111111;right:150.50px;transform:scaleX(1.1000);transform-origin:100% 0;">-</div>
<div class="t" style="top:795.90px;font-size:20.50px;line-height:20.50px;color:#111111;left:140.80px;transform:scaleX(1.0600);transform-origin:0 0;">Exterior Signage &amp; Branding</div>
<div class="t" style="top:795.90px;font-size:20.50px;line-height:20.50px;color:#111111;left:550.00px;width:1000px;text-align:center;transform:scaleX(1.0600);transform-origin:50% 0;">Jan-26</div>
<div class="t" style="top:795.90px;font-size:20.50px;line-height:20.50px;color:#111111;left:756.00px;width:1000px;text-align:center;transform:scaleX(1.0600);transform-origin:50% 0;">Mar-26</div>
<div class="t" style="top:795.90px;font-size:20.50px;line-height:20.50px;color:#111111;right:1348.00px;transform:scaleX(1.0600);transform-origin:100% 0;">5,000</div>
<div class="t" style="top:795.90px;font-size:20.50px;line-height:20.50px;color:#111111;left:1169.50px;width:1000px;text-align:center;transform:scaleX(1.0600);transform-origin:50% 0;">Yes</div>
<div class="t" style="top:795.90px;font-size:20.50px;line-height:20.50px;color:#111111;right:972.00px;transform:scaleX(1.0600);transform-origin:100% 0;">1,667</div>
<div class="t" style="top:795.90px;font-size:20.50px;line-height:20.50px;color:#111111;right:803.00px;transform:scaleX(1.0600);transform-origin:100% 0;">1,667</div>
<div class="t" style="top:795.90px;font-size:20.50px;line-height:20.50px;color:#111111;right:634.00px;transform:scaleX(1.0600);transform-origin:100% 0;">1,667</div>
<div class="t" style="top:795.90px;font-size:20.50px;line-height:20.50px;color:#111111;right:488.50px;transform:scaleX(1.1000);transform-origin:100% 0;">-</div>
<div class="t" style="top:795.90px;font-size:20.50px;line-height:20.50px;color:#111111;right:319.50px;transform:scaleX(1.1000);transform-origin:100% 0;">-</div>
<div class="t" style="top:795.90px;font-size:20.50px;line-height:20.50px;color:#111111;right:150.50px;transform:scaleX(1.1000);transform-origin:100% 0;">-</div>
<div class="t" style="top:823.95px;font-size:20.50px;line-height:20.50px;color:#111111;left:140.80px;transform:scaleX(1.0600);transform-origin:0 0;">Security System Installation</div>
<div class="t" style="top:823.95px;font-size:20.50px;line-height:20.50px;color:#111111;left:550.00px;width:1000px;text-align:center;transform:scaleX(1.0600);transform-origin:50% 0;">Jan-26</div>
<div class="t" style="top:823.95px;font-size:20.50px;line-height:20.50px;color:#111111;left:756.00px;width:1000px;text-align:center;transform:scaleX(1.0600);transform-origin:50% 0;">Jan-26</div>
<div class="t" style="top:823.95px;font-size:20.50px;line-height:20.50px;color:#111111;right:1348.00px;transform:scaleX(1.0600);transform-origin:100% 0;">1,500</div>
<div class="t" style="top:823.95px;font-size:20.50px;line-height:20.50px;color:#111111;left:1169.50px;width:1000px;text-align:center;transform:scaleX(1.0600);transform-origin:50% 0;">Yes</div>
<div class="t" style="top:823.95px;font-size:20.50px;line-height:20.50px;color:#111111;right:972.00px;transform:scaleX(1.0600);transform-origin:100% 0;">1,500</div>
<div class="t" style="top:823.95px;font-size:20.50px;line-height:20.50px;color:#111111;right:826.50px;transform:scaleX(1.1000);transform-origin:100% 0;">-</div>
<div class="t" style="top:823.95px;font-size:20.50px;line-height:20.50px;color:#111111;right:657.50px;transform:scaleX(1.1000);transform-origin:100% 0;">-</div>
<div class="t" style="top:823.95px;font-size:20.50px;line-height:20.50px;color:#111111;right:488.50px;transform:scaleX(1.1000);transform-origin:100% 0;">-</div>
<div class="t" style="top:823.95px;font-size:20.50px;line-height:20.50px;color:#111111;right:319.50px;transform:scaleX(1.1000);transform-origin:100% 0;">-</div>
<div class="t" style="top:823.95px;font-size:20.50px;line-height:20.50px;color:#111111;right:150.50px;transform:scaleX(1.1000);transform-origin:100% 0;">-</div>
<div class="t" style="top:852.00px;font-size:20.50px;line-height:20.50px;color:#111111;left:140.80px;transform:scaleX(1.0600);transform-origin:0 0;">Coffee &amp; Boba Tea Equipment</div>
<div class="t" style="top:852.00px;font-size:20.50px;line-height:20.50px;color:#111111;left:550.00px;width:1000px;text-align:center;transform:scaleX(1.0600);transform-origin:50% 0;">Jan-26</div>
<div class="t" style="top:852.00px;font-size:20.50px;line-height:20.50px;color:#111111;left:756.00px;width:1000px;text-align:center;transform:scaleX(1.0600);transform-origin:50% 0;">Feb-26</div>
<div class="t" style="top:852.00px;font-size:20.50px;line-height:20.50px;color:#111111;right:1348.00px;transform:scaleX(1.0600);transform-origin:100% 0;">6,000</div>
<div class="t" style="top:852.00px;font-size:20.50px;line-height:20.50px;color:#111111;left:1169.50px;width:1000px;text-align:center;transform:scaleX(1.0600);transform-origin:50% 0;">Yes</div>
<div class="t" style="top:852.00px;font-size:20.50px;line-height:20.50px;color:#111111;right:972.00px;transform:scaleX(1.0600);transform-origin:100% 0;">3,000</div>
<div class="t" style="top:852.00px;font-size:20.50px;line-height:20.50px;color:#111111;right:803.00px;transform:scaleX(1.0600);transform-origin:100% 0;">3,000</div>
<div class="t" style="top:852.00px;font-size:20.50px;line-height:20.50px;color:#111111;right:657.50px;transform:scaleX(1.1000);transform-origin:100% 0;">-</div>
<div class="t" style="top:852.00px;font-size:20.50px;line-height:20.50px;color:#111111;right:488.50px;transform:scaleX(1.1000);transform-origin:100% 0;">-</div>
<div class="t" style="top:852.00px;font-size:20.50px;line-height:20.50px;color:#111111;right:319.50px;transform:scaleX(1.1000);transform-origin:100% 0;">-</div>
<div class="t" style="top:852.00px;font-size:20.50px;line-height:20.50px;color:#111111;right:150.50px;transform:scaleX(1.1000);transform-origin:100% 0;">-</div>
<div class="t" style="top:880.05px;font-size:20.50px;line-height:20.50px;color:#111111;left:140.80px;transform:scaleX(1.0600);transform-origin:0 0;">Smallwares &amp; Utensils</div>
<div class="t" style="top:880.05px;font-size:20.50px;line-height:20.50px;color:#111111;left:550.00px;width:1000px;text-align:center;transform:scaleX(1.0600);transform-origin:50% 0;">Jan-26</div>
<div class="t" style="top:880.05px;font-size:20.50px;line-height:20.50px;color:#111111;left:756.00px;width:1000px;text-align:center;transform:scaleX(1.0600);transform-origin:50% 0;">Jan-26</div>
<div class="t" style="top:880.05px;font-size:20.50px;line-height:20.50px;color:#111111;right:1348.00px;transform:scaleX(1.0600);transform-origin:100% 0;">2,000</div>
<div class="t" style="top:880.05px;font-size:20.50px;line-height:20.50px;color:#111111;left:1169.50px;width:1000px;text-align:center;transform:scaleX(1.0600);transform-origin:50% 0;">Yes</div>
<div class="t" style="top:880.05px;font-size:20.50px;line-height:20.50px;color:#111111;right:972.00px;transform:scaleX(1.0600);transform-origin:100% 0;">2,000</div>
<div class="t" style="top:880.05px;font-size:20.50px;line-height:20.50px;color:#111111;right:826.50px;transform:scaleX(1.1000);transform-origin:100% 0;">-</div>
<div class="t" style="top:880.05px;font-size:20.50px;line-height:20.50px;color:#111111;right:657.50px;transform:scaleX(1.1000);transform-origin:100% 0;">-</div>
<div class="t" style="top:880.05px;font-size:20.50px;line-height:20.50px;color:#111111;right:488.50px;transform:scaleX(1.1000);transform-origin:100% 0;">-</div>
<div class="t" style="top:880.05px;font-size:20.50px;line-height:20.50px;color:#111111;right:319.50px;transform:scaleX(1.1000);transform-origin:100% 0;">-</div>
<div class="t" style="top:880.05px;font-size:20.50px;line-height:20.50px;color:#111111;right:150.50px;transform:scaleX(1.1000);transform-origin:100% 0;">-</div>
<div class="t" style="top:908.10px;font-size:20.50px;line-height:20.50px;color:#111111;left:140.80px;transform:scaleX(1.0600);transform-origin:0 0;">-</div>
<div class="t" style="top:908.10px;font-size:20.50px;line-height:20.50px;color:#111111;left:1169.50px;width:1000px;text-align:center;transform:scaleX(1.0600);transform-origin:50% 0;">Yes</div>
<div class="t" style="top:908.10px;font-size:20.50px;line-height:20.50px;color:#111111;right:995.50px;transform:scaleX(1.1000);transform-origin:100% 0;">-</div>
<div class="t" style="top:908.10px;font-size:20.50px;line-height:20.50px;color:#111111;right:826.50px;transform:scaleX(1.1000);transform-origin:100% 0;">-</div>
<div class="t" style="top:908.10px;font-size:20.50px;line-height:20.50px;color:#111111;right:657.50px;transform:scaleX(1.1000);transform-origin:100% 0;">-</div>
<div class="t" style="top:908.10px;font-size:20.50px;line-height:20.50px;color:#111111;right:488.50px;transform:scaleX(1.1000);transform-origin:100% 0;">-</div>
<div class="t" style="top:908.10px;font-size:20.50px;line-height:20.50px;color:#111111;right:319.50px;transform:scaleX(1.1000);transform-origin:100% 0;">-</div>
<div class="t" style="top:908.10px;font-size:20.50px;line-height:20.50px;color:#111111;right:150.50px;transform:scaleX(1.1000);transform-origin:100% 0;">-</div>
<div class="t" style="top:936.15px;font-size:20.50px;line-height:20.50px;color:#111111;left:140.80px;transform:scaleX(1.0600);transform-origin:0 0;">-</div>
<div class="t" style="top:936.15px;font-size:20.50px;line-height:20.50px;color:#111111;left:1169.50px;width:1000px;text-align:center;transform:scaleX(1.0600);transform-origin:50% 0;">Yes</div>
<div class="t" style="top:936.15px;font-size:20.50px;line-height:20.50px;color:#111111;right:995.50px;transform:scaleX(1.1000);transform-origin:100% 0;">-</div>
<div class="t" style="top:936.15px;font-size:20.50px;line-height:20.50px;color:#111111;right:826.50px;transform:scaleX(1.1000);transform-origin:100% 0;">-</div>
<div class="t" style="top:936.15px;font-size:20.50px;line-height:20.50px;color:#111111;right:657.50px;transform:scaleX(1.1000);transform-origin:100% 0;">-</div>
<div class="t" style="top:936.15px;font-size:20.50px;line-height:20.50px;color:#111111;right:488.50px;transform:scaleX(1.1000);transform-origin:100% 0;">-</div>
<div class="t" style="top:936.15px;font-size:20.50px;line-height:20.50px;color:#111111;right:319.50px;transform:scaleX(1.1000);transform-origin:100% 0;">-</div>
<div class="t" style="top:936.15px;font-size:20.50px;line-height:20.50px;color:#111111;right:150.50px;transform:scaleX(1.1000);transform-origin:100% 0;">-</div>
<div class="t" style="top:964.20px;font-size:20.50px;line-height:20.50px;color:#111111;left:140.80px;transform:scaleX(1.0600);transform-origin:0 0;">-</div>
<div class="t" style="top:964.20px;font-size:20.50px;line-height:20.50px;color:#111111;left:1169.50px;width:1000px;text-align:center;transform:scaleX(1.0600);transform-origin:50% 0;">Yes</div>
<div class="t" style="top:964.20px;font-size:20.50px;line-height:20.50px;color:#111111;right:995.50px;transform:scaleX(1.1000);transform-origin:100% 0;">-</div>
<div class="t" style="top:964.20px;font-size:20.50px;line-height:20.50px;color:#111111;right:826.50px;transform:scaleX(1.1000);transform-origin:100% 0;">-</div>
<div class="t" style="top:964.20px;font-size:20.50px;line-height:20.50px;color:#111111;right:657.50px;transform:scaleX(1.1000);transform-origin:100% 0;">-</div>
<div class="t" style="top:964.20px;font-size:20.50px;line-height:20.50px;color:#111111;right:488.50px;transform:scaleX(1.1000);transform-origin:100% 0;">-</div>
<div class="t" style="top:964.20px;font-size:20.50px;line-height:20.50px;color:#111111;right:319.50px;transform:scaleX(1.1000);transform-origin:100% 0;">-</div>
<div class="t" style="top:964.20px;font-size:20.50px;line-height:20.50px;color:#111111;right:150.50px;transform:scaleX(1.1000);transform-origin:100% 0;">-</div>
<div class="t" style="top:992.25px;font-size:20.50px;line-height:20.50px;color:#111111;left:140.80px;transform:scaleX(1.0600);transform-origin:0 0;">-</div>
<div class="t" style="top:992.25px;font-size:20.50px;line-height:20.50px;color:#111111;left:1169.50px;width:1000px;text-align:center;transform:scaleX(1.0600);transform-origin:50% 0;">Yes</div>
<div class="t" style="top:992.25px;font-size:20.50px;line-height:20.50px;color:#111111;right:995.50px;transform:scaleX(1.1000);transform-origin:100% 0;">-</div>
<div class="t" style="top:992.25px;font-size:20.50px;line-height:20.50px;color:#111111;right:826.50px;transform:scaleX(1.1000);transform-origin:100% 0;">-</div>
<div class="t" style="top:992.25px;font-size:20.50px;line-height:20.50px;color:#111111;right:657.50px;transform:scaleX(1.1000);transform-origin:100% 0;">-</div>
<div class="t" style="top:992.25px;font-size:20.50px;line-height:20.50px;color:#111111;right:488.50px;transform:scaleX(1.1000);transform-origin:100% 0;">-</div>
<div class="t" style="top:992.25px;font-size:20.50px;line-height:20.50px;color:#111111;right:319.50px;transform:scaleX(1.1000);transform-origin:100% 0;">-</div>
<div class="t" style="top:992.25px;font-size:20.50px;line-height:20.50px;color:#111111;right:150.50px;transform:scaleX(1.1000);transform-origin:100% 0;">-</div>
<div class="t" style="top:1020.30px;font-size:20.50px;line-height:20.50px;color:#111111;left:140.80px;transform:scaleX(1.0600);transform-origin:0 0;">-</div>
<div class="t" style="top:1020.30px;font-size:20.50px;line-height:20.50px;color:#111111;left:1169.50px;width:1000px;text-align:center;transform:scaleX(1.0600);transform-origin:50% 0;">Yes</div>
<div class="t" style="top:1020.30px;font-size:20.50px;line-height:20.50px;color:#111111;right:995.50px;transform:scaleX(1.1000);transform-origin:100% 0;">-</div>
<div class="t" style="top:1020.30px;font-size:20.50px;line-height:20.50px;color:#111111;right:826.50px;transform:scaleX(1.1000);transform-origin:100% 0;">-</div>
<div class="t" style="top:1020.30px;font-size:20.50px;line-height:20.50px;color:#111111;right:657.50px;transform:scaleX(1.1000);transform-origin:100% 0;">-</div>
<div class="t" style="top:1020.30px;font-size:20.50px;line-height:20.50px;color:#111111;right:488.50px;transform:scaleX(1.1000);transform-origin:100% 0;">-</div>
<div class="t" style="top:1020.30px;font-size:20.50px;line-height:20.50px;color:#111111;right:319.50px;transform:scaleX(1.1000);transform-origin:100% 0;">-</div>
<div class="t" style="top:1020.30px;font-size:20.50px;line-height:20.50px;color:#111111;right:150.50px;transform:scaleX(1.1000);transform-origin:100% 0;">-</div>
<div class="t" style="top:1048.35px;font-size:20.50px;line-height:20.50px;color:#111111;left:140.80px;transform:scaleX(1.0600);transform-origin:0 0;">-</div>
<div class="t" style="top:1048.35px;font-size:20.50px;line-height:20.50px;color:#111111;left:1169.50px;width:1000px;text-align:center;transform:scaleX(1.0600);transform-origin:50% 0;">Yes</div>
<div class="t" style="top:1048.35px;font-size:20.50px;line-height:20.50px;color:#111111;right:995.50px;transform:scaleX(1.1000);transform-origin:100% 0;">-</div>
<div class="t" style="top:1048.35px;font-size:20.50px;line-height:20.50px;color:#111111;right:826.50px;transform:scaleX(1.1000);transform-origin:100% 0;">-</div>
<div class="t" style="top:1048.35px;font-size:20.50px;line-height:20.50px;color:#111111;right:657.50px;transform:scaleX(1.1000);transform-origin:100% 0;">-</div>
<div class="t" style="top:1048.35px;font-size:20.50px;line-height:20.50px;color:#111111;right:488.50px;transform:scaleX(1.1000);transform-origin:100% 0;">-</div>
<div class="t" style="top:1048.35px;font-size:20.50px;line-height:20.50px;color:#111111;right:319.50px;transform:scaleX(1.1000);transform-origin:100% 0;">-</div>
<div class="t" style="top:1048.35px;font-size:20.50px;line-height:20.50px;color:#111111;right:150.50px;transform:scaleX(1.1000);transform-origin:100% 0;">-</div>
<div class="t" style="top:1076.40px;font-size:20.50px;line-height:20.50px;color:#111111;left:140.80px;transform:scaleX(1.0600);transform-origin:0 0;">-</div>
<div class="t" style="top:1076.40px;font-size:20.50px;line-height:20.50px;color:#111111;left:1169.50px;width:1000px;text-align:center;transform:scaleX(1.0600);transform-origin:50% 0;">Yes</div>
<div class="t" style="top:1076.40px;font-size:20.50px;line-height:20.50px;color:#111111;right:995.50px;transform:scaleX(1.1000);transform-origin:100% 0;">-</div>
<div class="t" style="top:1076.40px;font-size:20.50px;line-height:20.50px;color:#111111;right:826.50px;transform:scaleX(1.1000);transform-origin:100% 0;">-</div>
<div class="t" style="top:1076.40px;font-size:20.50px;line-height:20.50px;color:#111111;right:657.50px;transform:scaleX(1.1000);transform-origin:100% 0;">-</div>
<div class="t" style="top:1076.40px;font-size:20.50px;line-height:20.50px;color:#111111;right:488.50px;transform:scaleX(1.1000);transform-origin:100% 0;">-</div>
<div class="t" style="top:1076.40px;font-size:20.50px;line-height:20.50px;color:#111111;right:319.50px;transform:scaleX(1.1000);transform-origin:100% 0;">-</div>
<div class="t" style="top:1076.40px;font-size:20.50px;line-height:20.50px;color:#111111;right:150.50px;transform:scaleX(1.1000);transform-origin:100% 0;">-</div>
<div class="t" style="top:1104.45px;font-size:20.50px;line-height:20.50px;color:#111111;left:140.80px;transform:scaleX(1.0600);transform-origin:0 0;">-</div>
<div class="t" style="top:1104.45px;font-size:20.50px;line-height:20.50px;color:#111111;left:1169.50px;width:1000px;text-align:center;transform:scaleX(1.0600);transform-origin:50% 0;">Yes</div>
<div class="t" style="top:1104.45px;font-size:20.50px;line-height:20.50px;color:#111111;right:995.50px;transform:scaleX(1.1000);transform-origin:100% 0;">-</div>
<div class="t" style="top:1104.45px;font-size:20.50px;line-height:20.50px;color:#111111;right:826.50px;transform:scaleX(1.1000);transform-origin:100% 0;">-</div>
<div class="t" style="top:1104.45px;font-size:20.50px;line-height:20.50px;color:#111111;right:657.50px;transform:scaleX(1.1000);transform-origin:100% 0;">-</div>
<div class="t" style="top:1104.45px;font-size:20.50px;line-height:20.50px;color:#111111;right:488.50px;transform:scaleX(1.1000);transform-origin:100% 0;">-</div>
<div class="t" style="top:1104.45px;font-size:20.50px;line-height:20.50px;color:#111111;right:319.50px;transform:scaleX(1.1000);transform-origin:100% 0;">-</div>
<div class="t" style="top:1104.45px;font-size:20.50px;line-height:20.50px;color:#111111;right:150.50px;transform:scaleX(1.1000);transform-origin:100% 0;">-</div>
<div class="t" style="top:1132.50px;font-size:20.50px;line-height:20.50px;color:#111111;left:140.80px;transform:scaleX(1.0600);transform-origin:0 0;">-</div>
<div class="t" style="top:1132.50px;font-size:20.50px;line-height:20.50px;color:#111111;left:1169.50px;width:1000px;text-align:center;transform:scaleX(1.0600);transform-origin:50% 0;">Yes</div>
<div class="t" style="top:1132.50px;font-size:20.50px;line-height:20.50px;color:#111111;right:995.50px;transform:scaleX(1.1000);transform-origin:100% 0;">-</div>
<div class="t" style="top:1132.50px;font-size:20.50px;line-height:20.50px;color:#111111;right:826.50px;transform:scaleX(1.1000);transform-origin:100% 0;">-</div>
<div class="t" style="top:1132.50px;font-size:20.50px;line-height:20.50px;color:#111111;right:657.50px;transform:scaleX(1.1000);transform-origin:100% 0;">-</div>
<div class="t" style="top:1132.50px;font-size:20.50px;line-height:20.50px;color:#111111;right:488.50px;transform:scaleX(1.1000);transform-origin:100% 0;">-</div>
<div class="t" style="top:1132.50px;font-size:20.50px;line-height:20.50px;color:#111111;right:319.50px;transform:scaleX(1.1000);transform-origin:100% 0;">-</div>
<div class="t" style="top:1132.50px;font-size:20.50px;line-height:20.50px;color:#111111;right:150.50px;transform:scaleX(1.1000);transform-origin:100% 0;">-</div>
<div class="t" style="top:1160.55px;font-size:20.50px;line-height:20.50px;color:#111111;left:140.80px;transform:scaleX(1.0600);transform-origin:0 0;">-</div>
<div class="t" style="top:1160.55px;font-size:20.50px;line-height:20.50px;color:#111111;left:1169.50px;width:1000px;text-align:center;transform:scaleX(1.0600);transform-origin:50% 0;">Yes</div>
<div class="t" style="top:1160.55px;font-size:20.50px;line-height:20.50px;color:#111111;right:995.50px;transform:scaleX(1.1000);transform-origin:100% 0;">-</div>
<div class="t" style="top:1160.55px;font-size:20.50px;line-height:20.50px;color:#111111;right:826.50px;transform:scaleX(1.1000);transform-origin:100% 0;">-</div>
<div class="t" style="top:1160.55px;font-size:20.50px;line-height:20.50px;color:#111111;right:657.50px;transform:scaleX(1.1000);transform-origin:100% 0;">-</div>
<div class="t" style="top:1160.55px;font-size:20.50px;line-height:20.50px;color:#111111;right:488.50px;transform:scaleX(1.1000);transform-origin:100% 0;">-</div>
<div class="t" style="top:1160.55px;font-size:20.50px;line-height:20.50px;color:#111111;right:319.50px;transform:scaleX(1.1000);transform-origin:100% 0;">-</div>
<div class="t" style="top:1160.55px;font-size:20.50px;line-height:20.50px;color:#111111;right:150.50px;transform:scaleX(1.1000);transform-origin:100% 0;">-</div>
<div class="t" style="top:1188.60px;font-size:20.50px;line-height:20.50px;color:#111111;left:140.80px;transform:scaleX(1.0600);transform-origin:0 0;">-</div>
<div class="t" style="top:1188.60px;font-size:20.50px;line-height:20.50px;color:#111111;left:1169.50px;width:1000px;text-align:center;transform:scaleX(1.0600);transform-origin:50% 0;">Yes</div>
<div class="t" style="top:1188.60px;font-size:20.50px;line-height:20.50px;color:#111111;right:995.50px;transform:scaleX(1.1000);transform-origin:100% 0;">-</div>
<div class="t" style="top:1188.60px;font-size:20.50px;line-height:20.50px;color:#111111;right:826.50px;transform:scaleX(1.1000);transform-origin:100% 0;">-</div>
<div class="t" style="top:1188.60px;font-size:20.50px;line-height:20.50px;color:#111111;right:657.50px;transform:scaleX(1.1000);transform-origin:100% 0;">-</div>
<div class="t" style="top:1188.60px;font-size:20.50px;line-height:20.50px;color:#111111;right:488.50px;transform:scaleX(1.1000);transform-origin:100% 0;">-</div>
<div class="t" style="top:1188.60px;font-size:20.50px;line-height:20.50px;color:#111111;right:319.50px;transform:scaleX(1.1000);transform-origin:100% 0;">-</div>
<div class="t" style="top:1188.60px;font-size:20.50px;line-height:20.50px;color:#111111;right:150.50px;transform:scaleX(1.1000);transform-origin:100% 0;">-</div>
<div class="r" style="left:137.00px;top:1212.30px;width:2723.00px;height:35.40px;background:#4cb2e8;"></div>
<div class="t" style="top:1216.94px;font-size:27.00px;line-height:27.00px;color:#ffffff;font-weight:bold;-webkit-text-stroke:0.61px #ffffff;left:144.00px;transform:scaleX(1.1106);transform-origin:0 0;">Total</div>
<div class="t" style="top:1219.38px;font-size:22.00px;line-height:22.00px;color:#ffffff;font-weight:bold;-webkit-text-stroke:0.49px #ffffff;right:1351.00px;transform:scaleX(1.1264);transform-origin:100% 0;">89,500</div>
<div class="t" style="top:1219.38px;font-size:22.00px;line-height:22.00px;color:#ffffff;font-weight:bold;-webkit-text-stroke:0.49px #ffffff;right:975.00px;transform:scaleX(1.1264);transform-origin:100% 0;">38,750</div>
<div class="t" style="top:1219.38px;font-size:22.00px;line-height:22.00px;color:#ffffff;font-weight:bold;-webkit-text-stroke:0.49px #ffffff;right:806.00px;transform:scaleX(1.1264);transform-origin:100% 0;">24,250</div>
<div class="t" style="top:1219.38px;font-size:22.00px;line-height:22.00px;color:#ffffff;font-weight:bold;-webkit-text-stroke:0.49px #ffffff;right:637.00px;transform:scaleX(1.1264);transform-origin:100% 0;">15,250</div>
<div class="t" style="top:1219.38px;font-size:22.00px;line-height:22.00px;color:#ffffff;font-weight:bold;-webkit-text-stroke:0.49px #ffffff;right:468.00px;transform:scaleX(1.1264);transform-origin:100% 0;">11,250</div>
<div class="t" style="top:1220.22px;font-size:21.00px;line-height:21.00px;color:#ffffff;font-weight:bold;-webkit-text-stroke:0.47px #ffffff;right:325.50px;transform:scaleX(1.3000);transform-origin:100% 0;">-</div>
<div class="t" style="top:1220.22px;font-size:21.00px;line-height:21.00px;color:#ffffff;font-weight:bold;-webkit-text-stroke:0.47px #ffffff;right:156.50px;transform:scaleX(1.3000);transform-origin:100% 0;">-</div>
<div class="t" style="top:1307.83px;font-size:38.00px;line-height:38.00px;color:#222222;font-weight:bold;-webkit-text-stroke:0.77px #222222;left:96.40px;transform:scaleX(1.0735);transform-origin:0 0;">Startup Costs Depreciation, $</div>
<div class="r" style="left:137.00px;top:1373.50px;width:2723.00px;height:28.10px;background:#4cb2e8;"></div>
<div class="t" style="top:1378.75px;font-size:20.50px;line-height:20.50px;color:#ffffff;font-weight:bold;-webkit-text-stroke:0.46px #ffffff;left:142.70px;transform:scaleX(1.1200);transform-origin:0 0;">Opening Net Book Value</div>
<div class="t" style="top:1378.75px;font-size:20.50px;line-height:20.50px;color:#ffffff;font-weight:bold;-webkit-text-stroke:0.46px #ffffff;right:1001.50px;transform:scaleX(1.3000);transform-origin:100% 0;">-</div>
<div class="t" style="top:1377.48px;font-size:22.00px;line-height:22.00px;color:#ffffff;font-weight:bold;-webkit-text-stroke:0.49px #ffffff;right:806.00px;transform:scaleX(1.1264);transform-origin:100% 0;">38,427</div>
<div class="t" style="top:1377.48px;font-size:22.00px;line-height:22.00px;color:#ffffff;font-weight:bold;-webkit-text-stroke:0.49px #ffffff;right:637.00px;transform:scaleX(1.1264);transform-origin:100% 0;">62,152</div>
<div class="t" style="top:1377.48px;font-size:22.00px;line-height:22.00px;color:#ffffff;font-weight:bold;-webkit-text-stroke:0.49px #ffffff;right:468.00px;transform:scaleX(1.1264);transform-origin:100% 0;">76,750</div>
<div class="t" style="top:1377.48px;font-size:22.00px;line-height:22.00px;color:#ffffff;font-weight:bold;-webkit-text-stroke:0.49px #ffffff;right:299.00px;transform:scaleX(1.1264);transform-origin:100% 0;">87,254</div>
<div class="t" style="top:1377.48px;font-size:22.00px;line-height:22.00px;color:#ffffff;font-weight:bold;-webkit-text-stroke:0.49px #ffffff;right:130.00px;transform:scaleX(1.1264);transform-origin:100% 0;">86,508</div>
<div class="r" style="left:1566.00px;top:1399.60px;width:207.00px;height:2.00px;background:#ffffff;"></div>
<div class="t" style="top:1405.25px;font-size:20.50px;line-height:20.50px;color:#111111;left:162.40px;transform:scaleX(1.0600);transform-origin:0 0;">Expenditure - Amortizable</div>
<div class="t" style="top:1405.25px;font-size:20.50px;line-height:20.50px;color:#111111;right:1164.50px;transform:scaleX(1.1000);transform-origin:100% 0;">-</div>
<div class="t" style="top:1405.25px;font-size:20.50px;line-height:20.50px;color:#111111;right:972.00px;transform:scaleX(1.0600);transform-origin:100% 0;">38,750</div>
<div class="t" style="top:1405.25px;font-size:20.50px;line-height:20.50px;color:#111111;right:803.00px;transform:scaleX(1.0600);transform-origin:100% 0;">24,250</div>
<div class="t" style="top:1405.25px;font-size:20.50px;line-height:20.50px;color:#111111;right:634.00px;transform:scaleX(1.0600);transform-origin:100% 0;">15,250</div>
<div class="t" style="top:1405.25px;font-size:20.50px;line-height:20.50px;color:#111111;right:465.00px;transform:scaleX(1.0600);transform-origin:100% 0;">11,250</div>
<div class="t" style="top:1405.25px;font-size:20.50px;line-height:20.50px;color:#111111;right:319.50px;transform:scaleX(1.1000);transform-origin:100% 0;">-</div>
<div class="t" style="top:1405.25px;font-size:20.50px;line-height:20.50px;color:#111111;right:150.50px;transform:scaleX(1.1000);transform-origin:100% 0;">-</div>
<div class="t" style="top:1432.95px;font-size:20.50px;line-height:20.50px;color:#111111;left:162.40px;transform:scaleX(1.0738);transform-origin:0 0;">Depreciation (Depreciation Period (Years) - 10)</div>
<div class="t" style="top:1432.95px;font-size:20.50px;line-height:20.50px;color:#111111;right:972.00px;transform:scaleX(1.0600);transform-origin:100% 0;">323</div>
<div class="t" style="top:1432.95px;font-size:20.50px;line-height:20.50px;color:#111111;right:803.00px;transform:scaleX(1.0600);transform-origin:100% 0;">525</div>
<div class="t" style="top:1432.95px;font-size:20.50px;line-height:20.50px;color:#111111;right:634.00px;transform:scaleX(1.0600);transform-origin:100% 0;">652</div>
<div class="t" style="top:1432.95px;font-size:20.50px;line-height:20.50px;color:#111111;right:465.00px;transform:scaleX(1.0600);transform-origin:100% 0;">746</div>
<div class="t" style="top:1432.95px;font-size:20.50px;line-height:20.50px;color:#111111;right:296.00px;transform:scaleX(1.0600);transform-origin:100% 0;">746</div>
<div class="t" style="top:1432.95px;font-size:20.50px;line-height:20.50px;color:#111111;right:127.00px;transform:scaleX(1.0600);transform-origin:100% 0;">746</div>
<div class="r" style="left:137.00px;top:1457.30px;width:2723.00px;height:28.20px;background:#4cb2e8;"></div>
<div class="t" style="top:1462.65px;font-size:20.50px;line-height:20.50px;color:#ffffff;font-weight:bold;-webkit-text-stroke:0.46px #ffffff;left:142.70px;transform:scaleX(1.1200);transform-origin:0 0;">Closing Net Book Value</div>
<div class="t" style="top:1462.65px;font-size:20.50px;line-height:20.50px;color:#ffffff;font-weight:bold;-webkit-text-stroke:0.46px #ffffff;right:1170.50px;transform:scaleX(1.3000);transform-origin:100% 0;">-</div>
<div class="t" style="top:1461.38px;font-size:22.00px;line-height:22.00px;color:#ffffff;font-weight:bold;-webkit-text-stroke:0.49px #ffffff;right:975.00px;transform:scaleX(1.1264);transform-origin:100% 0;">38,427</div>
<div class="t" style="top:1461.38px;font-size:22.00px;line-height:22.00px;color:#ffffff;font-weight:bold;-webkit-text-stroke:0.49px #ffffff;right:806.00px;transform:scaleX(1.1264);transform-origin:100% 0;">62,152</div>
<div class="t" style="top:1461.38px;font-size:22.00px;line-height:22.00px;color:#ffffff;font-weight:bold;-webkit-text-stroke:0.49px #ffffff;right:637.00px;transform:scaleX(1.1264);transform-origin:100% 0;">76,750</div>
<div class="t" style="top:1461.38px;font-size:22.00px;line-height:22.00px;color:#ffffff;font-weight:bold;-webkit-text-stroke:0.49px #ffffff;right:468.00px;transform:scaleX(1.1264);transform-origin:100% 0;">87,254</div>
<div class="t" style="top:1461.38px;font-size:22.00px;line-height:22.00px;color:#ffffff;font-weight:bold;-webkit-text-stroke:0.49px #ffffff;right:299.00px;transform:scaleX(1.1264);transform-origin:100% 0;">86,508</div>
<div class="t" style="top:1461.38px;font-size:22.00px;line-height:22.00px;color:#ffffff;font-weight:bold;-webkit-text-stroke:0.49px #ffffff;right:130.00px;transform:scaleX(1.1264);transform-origin:100% 0;">85,763</div>
<div class="r" style="left:137.00px;top:1527.50px;width:2723.00px;height:28.00px;background:#4cb2e8;"></div>
<div class="t" style="top:1532.65px;font-size:20.50px;line-height:20.50px;color:#ffffff;font-weight:bold;-webkit-text-stroke:0.46px #ffffff;left:142.70px;transform:scaleX(1.1200);transform-origin:0 0;">Opening Net Book Value</div>
<div class="t" style="top:1532.65px;font-size:20.50px;line-height:20.50px;color:#ffffff;font-weight:bold;-webkit-text-stroke:0.46px #ffffff;right:1001.50px;transform:scaleX(1.3000);transform-origin:100% 0;">-</div>
<div class="t" style="top:1532.65px;font-size:20.50px;line-height:20.50px;color:#ffffff;font-weight:bold;-webkit-text-stroke:0.46px #ffffff;right:832.50px;transform:scaleX(1.3000);transform-origin:100% 0;">-</div>
<div class="t" style="top:1532.65px;font-size:20.50px;line-height:20.50px;color:#ffffff;font-weight:bold;-webkit-text-stroke:0.46px #ffffff;right:663.50px;transform:scaleX(1.3000);transform-origin:100% 0;">-</div>
<div class="t" style="top:1532.65px;font-size:20.50px;line-height:20.50px;color:#ffffff;font-weight:bold;-webkit-text-stroke:0.46px #ffffff;right:494.50px;transform:scaleX(1.3000);transform-origin:100% 0;">-</div>
<div class="t" style="top:1532.65px;font-size:20.50px;line-height:20.50px;color:#ffffff;font-weight:bold;-webkit-text-stroke:0.46px #ffffff;right:325.50px;transform:scaleX(1.3000);transform-origin:100% 0;">-</div>
<div class="t" style="top:1532.65px;font-size:20.50px;line-height:20.50px;color:#ffffff;font-weight:bold;-webkit-text-stroke:0.46px #ffffff;right:156.50px;transform:scaleX(1.3000);transform-origin:100% 0;">-</div>
<div class="r" style="left:1566.00px;top:1553.50px;width:207.00px;height:2.00px;background:#ffffff;"></div>
<div class="t" style="top:1558.95px;font-size:20.50px;line-height:20.50px;color:#111111;left:162.40px;transform:scaleX(1.0600);transform-origin:0 0;">Expenditure - Non-Amortizable</div>
<div class="t" style="top:1558.95px;font-size:20.50px;line-height:20.50px;color:#111111;right:995.50px;transform:scaleX(1.1000);transform-origin:100% 0;">-</div>
<div class="t" style="top:1558.95px;font-size:20.50px;line-height:20.50px;color:#111111;right:826.50px;transform:scaleX(1.1000);transform-origin:100% 0;">-</div>
<div class="t" style="top:1558.95px;font-size:20.50px;line-height:20.50px;color:#111111;right:657.50px;transform:scaleX(1.1000);transform-origin:100% 0;">-</div>
<div class="t" style="top:1558.95px;font-size:20.50px;line-height:20.50px;color:#111111;right:488.50px;transform:scaleX(1.1000);transform-origin:100% 0;">-</div>
<div class="t" style="top:1558.95px;font-size:20.50px;line-height:20.50px;color:#111111;right:319.50px;transform:scaleX(1.1000);transform-origin:100% 0;">-</div>
<div class="t" style="top:1558.95px;font-size:20.50px;line-height:20.50px;color:#111111;right:150.50px;transform:scaleX(1.1000);transform-origin:100% 0;">-</div>
<div class="r" style="left:137.00px;top:1583.30px;width:2723.00px;height:28.40px;background:#4cb2e8;"></div>
<div class="t" style="top:1588.85px;font-size:20.50px;line-height:20.50px;color:#ffffff;font-weight:bold;-webkit-text-stroke:0.46px #ffffff;left:142.70px;transform:scaleX(1.1200);transform-origin:0 0;">Closing Net Book Value</div>
<div class="t" style="top:1588.85px;font-size:20.50px;line-height:20.50px;color:#ffffff;font-weight:bold;-webkit-text-stroke:0.46px #ffffff;right:1001.50px;transform:scaleX(1.3000);transform-origin:100% 0;">-</div>
<div class="t" style="top:1588.85px;font-size:20.50px;line-height:20.50px;color:#ffffff;font-weight:bold;-webkit-text-stroke:0.46px #ffffff;right:832.50px;transform:scaleX(1.3000);transform-origin:100% 0;">-</div>
<div class="t" style="top:1588.85px;font-size:20.50px;line-height:20.50px;color:#ffffff;font-weight:bold;-webkit-text-stroke:0.46px #ffffff;right:663.50px;transform:scaleX(1.3000);transform-origin:100% 0;">-</div>
<div class="t" style="top:1588.85px;font-size:20.50px;line-height:20.50px;color:#ffffff;font-weight:bold;-webkit-text-stroke:0.46px #ffffff;right:494.50px;transform:scaleX(1.3000);transform-origin:100% 0;">-</div>
<div class="t" style="top:1588.85px;font-size:20.50px;line-height:20.50px;color:#ffffff;font-weight:bold;-webkit-text-stroke:0.46px #ffffff;right:325.50px;transform:scaleX(1.3000);transform-origin:100% 0;">-</div>
<div class="t" style="top:1588.85px;font-size:20.50px;line-height:20.50px;color:#ffffff;font-weight:bold;-webkit-text-stroke:0.46px #ffffff;right:156.50px;transform:scaleX(1.3000);transform-origin:100% 0;">-</div>
<div class="r" style="left:1773.00px;top:305.00px;width:1.00px;height:1365.00px;background:#a8a8a8;"></div>
<div class="r" style="left:2860.00px;top:278.00px;width:31.00px;height:1392.00px;background:#0a0a0a;"></div>
<div class="r" style="left:2865.00px;top:282.00px;width:25.00px;height:1386.00px;background:#141414;border-radius:12px;"></div>
<svg class="r" style="left:2869.00px;top:286.00px;" width="14.00" height="10.00" viewBox="0 0 14.00 10.00"><path d="M7 1 L13 9 H1 Z" fill="#9a9a9a" stroke="#9a9a9a" stroke-width="1" stroke-linejoin="round"/></svg>
<div class="r" style="left:2869.50px;top:305.00px;width:13.00px;height:1309.00px;background:#9a9a9a;border-radius:7px;"></div>
<svg class="r" style="left:2869.00px;top:1654.00px;" width="14.00" height="10.00" viewBox="0 0 14.00 10.00"><path d="M1 1 H13 L7 9 Z" fill="#9a9a9a" stroke="#9a9a9a" stroke-width="1" stroke-linejoin="round"/></svg>
<div class="r" style="left:800.00px;top:1669.00px;width:140.00px;height:14.00px;background:#ffffff;"></div>
<div class="r" style="left:11.00px;top:1670.00px;width:820.50px;height:48.00px;background:#0a0a0a;border-top-right-radius:9px;"></div>
<div class="r" style="left:919.00px;top:1670.00px;width:1972.00px;height:48.00px;background:#0a0a0a;border-top-left-radius:9px;"></div>
<div class="r" style="left:825.00px;top:1700.00px;width:100.00px;height:18.00px;background:#0a0a0a;"></div>
<div class="r" style="left:11.00px;top:1670.00px;width:42.00px;height:1.20px;background:#555555;"></div>
<svg class="r" style="left:45.00px;top:1685.00px;" width="12.00" height="18.00" viewBox="0 0 12.00 18.00"><path d="M10 1.5 L2.5 9 L10 16.5" fill="none" stroke="#9a9a9a" stroke-width="1.7"/></svg>
<svg class="r" style="left:94.00px;top:1685.00px;" width="12.00" height="18.00" viewBox="0 0 12.00 18.00"><path d="M2 1.5 L9.5 9 L2 16.5" fill="none" stroke="#e0e0e0" stroke-width="1.7"/></svg>
<div class="t" style="top:1686.45px;font-size:20.50px;line-height:20.50px;color:#f4f4f4;left:190.00px;">Contents</div>
<div class="r" style="left:291.50px;top:1680.00px;width:1.40px;height:28.00px;background:#6e6e6e;"></div>
<div class="r" style="left:432.50px;top:1680.00px;width:1.40px;height:28.00px;background:#6e6e6e;"></div>
<div class="r" style="left:552.20px;top:1680.00px;width:1.40px;height:28.00px;background:#6e6e6e;"></div>
<div class="r" style="left:723.10px;top:1680.00px;width:1.40px;height:28.00px;background:#6e6e6e;"></div>
<div class="r" style="left:824.90px;top:1680.00px;width:1.40px;height:28.00px;background:#6e6e6e;"></div>
<div class="r" style="left:924.50px;top:1680.00px;width:1.40px;height:28.00px;background:#6e6e6e;"></div>
<div class="r" style="left:1051.00px;top:1680.00px;width:1.40px;height:28.00px;background:#6e6e6e;"></div>
<div class="r" style="left:1154.00px;top:1680.00px;width:1.40px;height:28.00px;background:#6e6e6e;"></div>
<div class="r" style="left:1209.20px;top:1680.00px;width:1.40px;height:28.00px;background:#6e6e6e;"></div>
<div class="r" style="left:1270.10px;top:1680.00px;width:1.40px;height:28.00px;background:#6e6e6e;"></div>
<div class="r" style="left:1331.00px;top:1680.00px;width:1.40px;height:28.00px;background:#6e6e6e;"></div>
<div class="r" style="left:1458.90px;top:1680.00px;width:1.40px;height:28.00px;background:#6e6e6e;"></div>
<div class="r" style="left:1587.00px;top:1680.00px;width:1.40px;height:28.00px;background:#6e6e6e;"></div>
<div class="r" style="left:1714.10px;top:1680.00px;width:1.40px;height:28.00px;background:#6e6e6e;"></div>
<div class="r" style="left:1775.00px;top:1680.00px;width:1.40px;height:28.00px;background:#6e6e6e;"></div>
<div class="r" style="left:1860.20px;top:1680.00px;width:1.40px;height:28.00px;background:#6e6e6e;"></div>
<div class="r" style="left:1957.80px;top:1680.00px;width:1.40px;height:28.00px;background:#6e6e6e;"></div>
<div class="r" style="left:2034.90px;top:1680.00px;width:1.40px;height:28.00px;background:#6e6e6e;"></div>
<div class="r" style="left:299.00px;top:1676.00px;width:128.00px;height:35.50px;background:#ffeb6e;border-radius:7px;"></div>
<div class="t" style="top:1685.10px;font-size:21.50px;line-height:21.50px;color:#111111;left:-137.00px;width:1000px;text-align:center;transform:scaleX(0.8820);transform-origin:50% 0;-webkit-text-stroke:0.15px #111111;">Dashboard</div>
<div class="r" style="left:440.00px;top:1676.00px;width:106.00px;height:35.50px;background:#ffeb6e;border-radius:7px;"></div>
<div class="t" style="top:1685.10px;font-size:21.50px;line-height:21.50px;color:#111111;left:-7.00px;width:1000px;text-align:center;transform:scaleX(0.8820);transform-origin:50% 0;-webkit-text-stroke:0.15px #111111;">Revenue</div>
<div class="r" style="left:559.00px;top:1676.00px;width:158.00px;height:35.50px;background:#ffeb6e;border-radius:7px;"></div>
<div class="t" style="top:1685.10px;font-size:21.50px;line-height:21.50px;color:#111111;left:138.00px;width:1000px;text-align:center;transform:scaleX(0.8820);transform-origin:50% 0;-webkit-text-stroke:0.15px #111111;">COGS &amp; OPEX</div>
<div class="r" style="left:730.00px;top:1676.00px;width:89.00px;height:35.50px;background:#ffeb6e;border-radius:7px;"></div>
<div class="t" style="top:1685.10px;font-size:21.50px;line-height:21.50px;color:#111111;left:274.50px;width:1000px;text-align:center;transform:scaleX(0.8820);transform-origin:50% 0;-webkit-text-stroke:0.15px #111111;">Payroll</div>
<div class="r" style="left:931.70px;top:1676.00px;width:113.30px;height:35.50px;background:#ffeb6e;border-radius:7px;"></div>
<div class="t" style="top:1685.10px;font-size:21.50px;line-height:21.50px;color:#111111;left:488.35px;width:1000px;text-align:center;transform:scaleX(0.8820);transform-origin:50% 0;-webkit-text-stroke:0.15px #111111;">CapTable</div>
<div class="r" style="left:1058.00px;top:1676.00px;width:90.00px;height:35.50px;background:#ffeb6e;border-radius:7px;"></div>
<div class="t" style="top:1685.10px;font-size:21.50px;line-height:21.50px;color:#111111;left:603.00px;width:1000px;text-align:center;transform:scaleX(0.8820);transform-origin:50% 0;-webkit-text-stroke:0.15px #111111;">Capital</div>
<div class="r" style="left:1161.00px;top:1676.00px;width:42.00px;height:35.50px;background:#4cb4ea;border-radius:7px;"></div>
<div class="t" style="top:1685.10px;font-size:21.50px;line-height:21.50px;color:#111111;left:682.00px;width:1000px;text-align:center;transform:scaleX(0.8820);transform-origin:50% 0;-webkit-text-stroke:0.15px #111111;">IS</div>
<div class="r" style="left:1216.00px;top:1676.00px;width:48.00px;height:35.50px;background:#4cb4ea;border-radius:7px;"></div>
<div class="t" style="top:1685.10px;font-size:21.50px;line-height:21.50px;color:#111111;left:740.00px;width:1000px;text-align:center;transform:scaleX(0.8820);transform-origin:50% 0;-webkit-text-stroke:0.15px #111111;">CF</div>
<div class="r" style="left:1277.00px;top:1676.00px;width:47.70px;height:35.50px;background:#4cb4ea;border-radius:7px;"></div>
<div class="t" style="top:1685.10px;font-size:21.50px;line-height:21.50px;color:#111111;left:800.85px;width:1000px;text-align:center;transform:scaleX(0.8820);transform-origin:50% 0;-webkit-text-stroke:0.15px #111111;">BS</div>
<div class="r" style="left:1338.00px;top:1676.00px;width:114.80px;height:35.50px;background:#4cb4ea;border-radius:7px;"></div>
<div class="t" style="top:1685.10px;font-size:21.50px;line-height:21.50px;color:#111111;left:895.40px;width:1000px;text-align:center;transform:scaleX(0.8820);transform-origin:50% 0;-webkit-text-stroke:0.15px #111111;">Scenarios</div>
<div class="r" style="left:1465.80px;top:1676.00px;width:114.90px;height:35.50px;background:#4cb4ea;border-radius:7px;"></div>
<div class="t" style="top:1685.10px;font-size:21.50px;line-height:21.50px;color:#111111;left:1023.25px;width:1000px;text-align:center;transform:scaleX(0.8820);transform-origin:50% 0;-webkit-text-stroke:0.15px #111111;">Valuation</div>
<div class="r" style="left:1594.00px;top:1676.00px;width:113.80px;height:35.50px;background:#4cb4ea;border-radius:7px;"></div>
<div class="t" style="top:1685.10px;font-size:21.50px;line-height:21.50px;color:#111111;left:1150.90px;width:1000px;text-align:center;transform:scaleX(0.8820);transform-origin:50% 0;-webkit-text-stroke:0.15px #111111;">Summary</div>
<div class="r" style="left:1721.00px;top:1676.00px;width:47.70px;height:35.50px;background:#4cb4ea;border-radius:7px;"></div>
<div class="t" style="top:1685.10px;font-size:21.50px;line-height:21.50px;color:#111111;left:1244.85px;width:1000px;text-align:center;transform:scaleX(0.8820);transform-origin:50% 0;-webkit-text-stroke:0.15px #111111;">BE</div>
<div class="r" style="left:1782.00px;top:1676.00px;width:71.40px;height:35.50px;background:#4cb4ea;border-radius:7px;"></div>
<div class="t" style="top:1685.10px;font-size:21.50px;line-height:21.50px;color:#111111;left:1317.70px;width:1000px;text-align:center;transform:scaleX(0.8820);transform-origin:50% 0;-webkit-text-stroke:0.15px #111111;">ROIC</div>
<div class="r" style="left:1867.30px;top:1676.00px;width:84.40px;height:35.50px;background:#4cb4ea;border-radius:7px;"></div>
<div class="t" style="top:1685.10px;font-size:21.50px;line-height:21.50px;color:#111111;left:1409.50px;width:1000px;text-align:center;transform:scaleX(0.8820);transform-origin:50% 0;-webkit-text-stroke:0.15px #111111;">Charts</div>
<div class="r" style="left:1964.80px;top:1676.00px;width:64.10px;height:35.50px;background:#4cb4ea;border-radius:7px;"></div>
<div class="t" style="top:1685.10px;font-size:21.50px;line-height:21.50px;color:#111111;left:1496.85px;width:1000px;text-align:center;transform:scaleX(0.8820);transform-origin:50% 0;-webkit-text-stroke:0.15px #111111;">KPIs</div>
<div class="r" style="left:2042.3px;top:1676.0px;width:29.7px;height:35.5px;background:#4cb4ea;border-radius:7px 0 0 7px;overflow:hidden;"><div class="t" style="left:13px;top:10.45px;font-size:20.5px;line-height:20.5px;color:#1a1a1a;transform:scaleX(1.08);transform-origin:0 0;">Scenarios</div></div>
<div class="r" style="left:831.5px;top:1669px;width:87.5px;height:42.5px;background:#fdfbf1;border-radius:0 0 8px 8px;"></div>
<div class="t" style="top:1680.65px;font-size:20.50px;line-height:20.50px;color:#222222;left:375.50px;width:1000px;text-align:center;transform:scaleX(0.9065);transform-origin:50% 0;">CAPEX</div>
<div class="r" style="left:844.00px;top:1704.50px;width:63.00px;height:2.60px;background:#1f7a3a;"></div>
<div class="r" style="left:2087.5px;top:1690px;width:4.6px;height:4.6px;border-radius:50%;background:#ffffff;"></div>
<div class="r" style="left:2094.5px;top:1690px;width:4.6px;height:4.6px;border-radius:50%;background:#ffffff;"></div>
<div class="r" style="left:2101.5px;top:1690px;width:4.6px;height:4.6px;border-radius:50%;background:#ffffff;"></div>
<div class="r" style="left:2135.00px;top:1692.20px;width:17.00px;height:1.60px;background:#ffffff;"></div>
<div class="r" style="left:2142.70px;top:1684.50px;width:1.60px;height:17.00px;background:#ffffff;"></div>
<div class="r" style="left:2190.00px;top:1687.00px;width:4.00px;height:3.60px;background:#ffffff;"></div>
<div class="r" style="left:2190.00px;top:1693.50px;width:4.00px;height:3.60px;background:#ffffff;"></div>
<div class="r" style="left:2190.00px;top:1700.00px;width:4.00px;height:3.60px;background:#ffffff;"></div>
<div class="r" style="left:2216.00px;top:1680.00px;width:643.00px;height:26.00px;background:#151515;border-radius:13px;"></div>
<svg class="r" style="left:2223.00px;top:1686.00px;" width="11.00" height="14.00" viewBox="0 0 11.00 14.00"><path d="M10 1 V13 L1.5 7 Z" fill="#9a9a9a" stroke="#9a9a9a" stroke-width="1" stroke-linejoin="round"/></svg>
<div class="r" style="left:2242.00px;top:1687.00px;width:55.00px;height:12.50px;background:#9a9a9a;border-radius:6.5px;"></div>
<svg class="r" style="left:2843.00px;top:1686.00px;" width="11.00" height="14.00" viewBox="0 0 11.00 14.00"><path d="M1 1 V13 L9.5 7 Z" fill="#9a9a9a" stroke="#9a9a9a" stroke-width="1" stroke-linejoin="round"/></svg>
<div class="r" style="left:11.00px;top:1718.00px;width:2880.00px;height:32.50px;background:#161616;"></div>
<div class="r" style="left:11.00px;top:1717.50px;width:2880.00px;height:1.00px;background:#2a2a2a;"></div>
<div class="t" style="top:1728.11px;font-size:17.00px;line-height:17.00px;color:#f0f0f0;left:27.00px;transform:scaleX(0.8750);transform-origin:0 0;">Ready</div>
<svg class="r" style="left:98.00px;top:1725.00px;" width="24.00" height="22.00" viewBox="0 0 24.00 22.00"><path d="M12.5 19.6 H1.8 V1.8 H22.3 V11" fill="none" stroke="#fff" stroke-width="1.8"/><path d="M3.4 4.6 H20.6" stroke="#fff" stroke-width="1.6"/><path d="M4.4 8.3 H8.4 M4.4 11 H7.6 M4.4 13.8 H7.6" stroke="#fff" stroke-width="1.5"/><circle cx="15.9" cy="14.1" r="5.7" fill="none" stroke="#fff" stroke-width="1.7"/><circle cx="15.9" cy="14.1" r="3.2" fill="#fff"/></svg>
<svg class="r" style="left:145.00px;top:1723.00px;" width="24.00" height="24.00" viewBox="0 0 24.00 24.00"><circle cx="9.8" cy="4.3" r="3" fill="none" stroke="#fff" stroke-width="1.8"/><path d="M2.5 6.5 Q9.8 10 17 6.5 M9.8 8.5 V14.5 L6.8 20.5 M9.8 14.5 L11.6 18" fill="none" stroke="#fff" stroke-width="5" stroke-linecap="round" stroke-linejoin="round"/><path d="M2.5 6.5 Q9.8 10 17 6.5 M9.8 8.5 V14.5 L6.8 20.5 M9.8 14.5 L11.6 18" fill="none" stroke="#161616" stroke-width="1.8" stroke-linecap="round" stroke-linejoin="round"/><path d="M12.6 13 L21.6 22 M21.6 13 L12.6 22" stroke="#fff" stroke-width="1.5"/></svg>
<div class="t" style="top:1728.11px;font-size:17.00px;line-height:17.00px;color:#f4f4f4;font-weight:bold;left:173.00px;transform:scaleX(0.9255);transform-origin:0 0;">Accessibility: Investigate</div>
<div class="r" style="left:2444.80px;top:1719.00px;width:60.00px;height:31.50px;background:#262626;"></div>
<svg class="r" style="left:2463.00px;top:1723.00px;" width="22.00" height="22.00" viewBox="0 0 22.00 22.00"><rect x="1.8" y="1.8" width="18.6" height="18.6" fill="none" stroke="#fff" stroke-width="1.8"/><path d="M8 1 V21 M14.2 1 V21 M1 8 H21 M1 14.2 H21" stroke="#fff" stroke-width="1.7"/></svg>
<svg class="r" style="left:2523.00px;top:1723.00px;" width="24.00" height="22.00" viewBox="0 0 24.00 22.00"><rect x="1.8" y="1.8" width="20" height="18.6" fill="none" stroke="#fff" stroke-width="1.8"/><rect x="6.6" y="4.2" width="10.6" height="13.6" fill="none" stroke="#fff" stroke-width="1.6"/><path d="M8.6 8 H15.4 M8.6 11 H15.4 M8.6 14 H15.4" stroke="#fff" stroke-width="1.7"/></svg>
<svg class="r" style="left:2583.00px;top:1723.00px;" width="24.00" height="22.00" viewBox="0 0 24.00 22.00"><rect x="1.8" y="1.8" width="19.8" height="18.6" fill="none" stroke="#fff" stroke-width="1.8"/><path d="M7.6 1.5 V13.3 M13.7 1.5 V13.3 M1.5 13.3 H14.6" fill="none" stroke="#fff" stroke-width="1.7"/></svg>
<div class="r" style="left:2633.00px;top:1734.40px;width:12.00px;height:1.20px;background:#e0e0e0;"></div>
<div class="r" style="left:2653.00px;top:1734.10px;width:148.00px;height:2.00px;background:#c4c4c4;"></div>
<div class="r" style="left:2726.30px;top:1731.00px;width:2.00px;height:8.50px;background:#c4c4c4;"></div>
<div class="r" style="left:2733.00px;top:1726.00px;width:8.00px;height:17.00px;background:#c2c2c2;"></div>
<div class="r" style="left:2809.00px;top:1734.40px;width:12.00px;height:1.20px;background:#e8e8e8;"></div>
<div class="r" style="left:2814.40px;top:1729.00px;width:1.20px;height:12.00px;background:#e8e8e8;"></div>
<div class="t" style="top:1727.23px;font-size:16.50px;line-height:16.50px;color:#f0f0f0;left:2840.00px;transform:scaleX(0.9123);transform-origin:0 0;">140%</div>
</body></html>
